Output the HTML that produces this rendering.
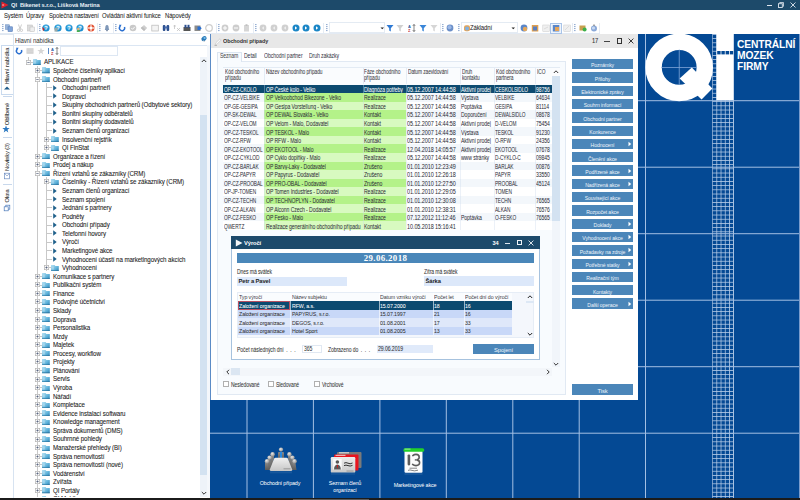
<!DOCTYPE html><html><head><meta charset="utf-8"><style>
*{margin:0;padding:0;box-sizing:border-box}
html,body{width:800px;height:500px;overflow:hidden;background:#fff;font-family:"Liberation Sans",sans-serif;color:#333}
.ab{position:absolute}
.t{position:absolute;white-space:nowrap;font-size:5.6px;line-height:8px;letter-spacing:-0.1px}
</style></head><body>
<div class="ab" style="left:0px;top:0px;width:800px;height:9.5px;background:#1d4a6a"></div>
<svg class="ab" style="left:1px;top:1px" width="8" height="8" viewBox="0 0 8 8"><path d="M0.5 0.5 L7.5 4 L0.5 7.5 Z" fill="#e0202a"/><path d="M1.5 3 L3.5 4 L1.5 5Z" fill="#fff" opacity=".7"/></svg>
<div class="t" style="left:10.5px;top:0.6px;transform:scaleX(0.93);transform-origin:0 0;font-weight:bold;color:#e6eef5;font-size:6.2px">QI&nbsp; Bikenet s.r.o., Lišková Martina</div>
<div class="ab" style="left:767px;top:4.5px;width:5px;height:0.8px;background:#dfe6ee"></div>
<svg class="ab" style="left:778px;top:2px" width="6" height="6" viewBox="0 0 6 6"><rect x="0.5" y="1.7" width="3.8" height="3.8" fill="none" stroke="#dfe6ee" stroke-width="0.9"/><path d="M1.7 1.2 V0.5 H5.5 V4.3 H4.8" fill="none" stroke="#dfe6ee" stroke-width="0.8"/></svg>
<svg class="ab" style="left:790px;top:2px" width="6" height="6" viewBox="0 0 6 6"><path d="M0.5 0.5 L5.5 5.5 M5.5 0.5 L0.5 5.5" stroke="#dfe6ee" stroke-width="0.9"/></svg>
<div class="t" style="left:3.5px;top:11.9px;transform:scaleX(0.86);transform-origin:0 0;color:#222;font-size:6.8px;-webkit-text-stroke:0.05px #222">Systém</div>
<div class="t" style="left:26px;top:11.9px;transform:scaleX(0.86);transform-origin:0 0;color:#222;font-size:6.8px;-webkit-text-stroke:0.05px #222">Úpravy</div>
<div class="t" style="left:48.5px;top:11.9px;transform:scaleX(0.86);transform-origin:0 0;color:#222;font-size:6.8px;-webkit-text-stroke:0.05px #222">Společná nastavení</div>
<div class="t" style="left:101.5px;top:11.9px;transform:scaleX(0.86);transform-origin:0 0;color:#222;font-size:6.8px;-webkit-text-stroke:0.05px #222">Ovládání aktivní funkce</div>
<div class="t" style="left:165px;top:11.9px;transform:scaleX(0.86);transform-origin:0 0;color:#222;font-size:6.8px;-webkit-text-stroke:0.05px #222">Nápovědy</div>
<div class="ab" style="left:0px;top:22px;width:600px;height:11.5px;background:#fff;border-bottom:1px solid #e3eaf3"></div>
<div class="ab" style="left:0px;top:33.5px;width:800px;height:0.8px;background:#dfe7f1"></div>
<svg class="ab" style="left:1.5px;top:23px" width="2" height="10" viewBox="0 0 2 10"><rect x="0.3" y="1" width="1.1" height="1.1" fill="#6d8fc0"/><rect x="0.3" y="3" width="1.1" height="1.1" fill="#6d8fc0"/><rect x="0.3" y="5" width="1.1" height="1.1" fill="#6d8fc0"/><rect x="0.3" y="7" width="1.1" height="1.1" fill="#6d8fc0"/></svg>
<svg class="ab" style="left:5px;top:24px" width="8" height="8" viewBox="0 0 8 8"><rect x="0.5" y="0.8" width="4" height="4.5" fill="#9bb7dd" stroke="#5e82b8" stroke-width=".5"/><rect x="3" y="2.8" width="4.5" height="4.8" fill="#7ea3d8" stroke="#4a70b0" stroke-width=".5"/></svg>
<svg class="ab" style="left:16px;top:24px" width="8" height="8" viewBox="0 0 8 8"><path d="M2.5 0.5 L4 5 M5.5 0.5 L4 5" stroke="#b8b8b8" stroke-width=".7" fill="none"/><circle cx="2.6" cy="6.3" r="1.2" fill="none" stroke="#b0b0b0" stroke-width=".6"/><circle cx="5.4" cy="6.3" r="1.2" fill="none" stroke="#b0b0b0" stroke-width=".6"/></svg>
<svg class="ab" style="left:27px;top:24px" width="8" height="8" viewBox="0 0 8 8"><rect x="0.5" y="1" width="5" height="6" fill="#ddd" stroke="#bbb" stroke-width=".5"/><rect x="3" y="3" width="4.5" height="4.5" fill="#eee" stroke="#bbb" stroke-width=".5"/></svg>
<div class="ab" style="left:37px;top:22.5px;width:0.6px;height:10.5px;background:#e6ecf4"></div>
<svg class="ab" style="left:39px;top:23px" width="2" height="10" viewBox="0 0 2 10"><rect x="0.3" y="1" width="1.1" height="1.1" fill="#6d8fc0"/><rect x="0.3" y="3" width="1.1" height="1.1" fill="#6d8fc0"/><rect x="0.3" y="5" width="1.1" height="1.1" fill="#6d8fc0"/><rect x="0.3" y="7" width="1.1" height="1.1" fill="#6d8fc0"/></svg>
<svg class="ab" style="left:42px;top:24px" width="8" height="8" viewBox="0 0 8 8"><circle cx="4" cy="4" r="3.6" fill="#1c8fd0"/><circle cx="4" cy="3.2" r="2.4" fill="#5fc0ee" opacity=".6"/><text x="4" y="6" font-size="5.5" text-anchor="middle" fill="#fff" font-family="Liberation Sans" font-weight="bold">?</text><path d="M0.3 3 L2.6 5 L1 7.2 Z" fill="#d42020"/></svg>
<svg class="ab" style="left:54px;top:24px" width="8" height="8" viewBox="0 0 8 8"><circle cx="4" cy="4" r="3.6" fill="#1c8fd0"/><circle cx="4" cy="3.2" r="2.4" fill="#5fc0ee" opacity=".6"/><text x="4" y="6" font-size="5.5" text-anchor="middle" fill="#fff" font-family="Liberation Sans" font-weight="bold">?</text><rect x="0.5" y="3.8" width="3" height="3.8" fill="#9aa" /></svg>
<svg class="ab" style="left:65px;top:24px" width="8" height="8" viewBox="0 0 8 8"><circle cx="4" cy="4" r="3.6" fill="#1c8fd0"/><circle cx="4" cy="3.2" r="2.4" fill="#5fc0ee" opacity=".6"/><text x="4" y="6" font-size="5.5" text-anchor="middle" fill="#fff" font-family="Liberation Sans" font-weight="bold">?</text></svg>
<svg class="ab" style="left:76px;top:24px" width="8" height="8" viewBox="0 0 8 8"><circle cx="4" cy="4" r="3.6" fill="#1c8fd0"/><circle cx="4" cy="3.2" r="2.4" fill="#5fc0ee" opacity=".6"/><text x="4" y="6" font-size="5.5" text-anchor="middle" fill="#fff" font-family="Liberation Sans" font-weight="bold">?</text><circle cx="2.3" cy="5" r="1.3" fill="#e8b070"/><rect x="0.8" y="6.2" width="3" height="1.8" fill="#4caf50"/></svg>
<svg class="ab" style="left:87px;top:24px" width="8" height="8" viewBox="0 0 8 8"><circle cx="4" cy="4" r="3.5" fill="#e24a2a"/><circle cx="4" cy="4" r="1.7" fill="#fff"/><path d="M4 0.5 V2.3 M4 5.7 V7.5 M0.5 4 H2.3 M5.7 4 H7.5" stroke="#f4d8d0" stroke-width="1.3"/><circle cx="4" cy="4" r="1.2" fill="#fff"/></svg>
<div class="ab" style="left:97px;top:22.5px;width:0.6px;height:10.5px;background:#e6ecf4"></div>
<svg class="ab" style="left:99px;top:23px" width="2" height="10" viewBox="0 0 2 10"><rect x="0.3" y="1" width="1.1" height="1.1" fill="#6d8fc0"/><rect x="0.3" y="3" width="1.1" height="1.1" fill="#6d8fc0"/><rect x="0.3" y="5" width="1.1" height="1.1" fill="#6d8fc0"/><rect x="0.3" y="7" width="1.1" height="1.1" fill="#6d8fc0"/></svg>
<svg class="ab" style="left:103px;top:24px" width="8" height="8" viewBox="0 0 8 8"><path d="M4 1 C2.5 1 2.3 2.5 2.3 4 L1.8 6 H6.2 L5.7 4 C5.7 2.5 5.5 1 4 1Z" fill="#7f97b8"/><rect x="3.3" y="6" width="1.4" height="1.2" fill="#5a6f8f"/></svg>
<div class="ab" style="left:113px;top:22.5px;width:0.6px;height:10.5px;background:#e6ecf4"></div>
<svg class="ab" style="left:115px;top:23px" width="2" height="10" viewBox="0 0 2 10"><rect x="0.3" y="1" width="1.1" height="1.1" fill="#6d8fc0"/><rect x="0.3" y="3" width="1.1" height="1.1" fill="#6d8fc0"/><rect x="0.3" y="5" width="1.1" height="1.1" fill="#6d8fc0"/><rect x="0.3" y="7" width="1.1" height="1.1" fill="#6d8fc0"/></svg>
<svg class="ab" style="left:118px;top:24px" width="8" height="8" viewBox="0 0 8 8"><path d="M2.2 2.2 A2.6 2.6 0 1 0 6.4 3" fill="none" stroke="#2a6fd0" stroke-width="1.5"/><path d="M1 0.8 L3.6 0.8 L2 3.6Z" fill="#2a6fd0"/></svg>
<svg class="ab" style="left:129px;top:24px" width="8" height="8" viewBox="0 0 8 8"><circle cx="4" cy="4" r="3.3" fill="#c9c9c9"/><path d="M2.3 4 L3.6 5.3 L5.8 2.8" stroke="#fff" stroke-width=".9" fill="none"/></svg>
<svg class="ab" style="left:140px;top:24px" width="8" height="8" viewBox="0 0 8 8"><path d="M0.8 4 L4 1 L7.2 4 L4 7Z" fill="#cfcfcf"/><path d="M0.8 4 L4 7 L5.5 5.5 L2.3 2.5Z" fill="#bdbdbd"/></svg>
<svg class="ab" style="left:151px;top:24px" width="8" height="8" viewBox="0 0 8 8"><rect x="0.8" y="1.2" width="6.5" height="5.8" fill="#f4f4f4" stroke="#b8b8b8" stroke-width=".7"/></svg>
<svg class="ab" style="left:162px;top:24px" width="8" height="8" viewBox="0 0 8 8"><rect x="0.8" y="1" width="2.6" height="6" rx="1" fill="#2b4f8f"/><rect x="4.6" y="1" width="2.6" height="6" rx="1" fill="#2b4f8f"/><rect x="2.5" y="2.5" width="3" height="2" fill="#4a6fb0"/></svg>
<svg class="ab" style="left:173px;top:24px" width="8" height="8" viewBox="0 0 8 8"><path d="M1.5 1 V5 M0.5 2 H3 M4 4 L7 7 M7 4 L4 7" stroke="#bbb" stroke-width=".7"/></svg>
<svg class="ab" style="left:183px;top:24px" width="8" height="8" viewBox="0 0 8 8"><rect x="0.5" y="3" width="7" height="4" fill="#555"/><rect x="1.5" y="0.8" width="2" height="3" fill="#2b4f8f"/><rect x="4.5" y="0.8" width="2" height="3" fill="#2b4f8f"/></svg>
<svg class="ab" style="left:194px;top:24px" width="8" height="8" viewBox="0 0 8 8"><rect x="0.5" y="1.5" width="6" height="5.5" fill="#8a8a8a"/><path d="M3.5 2.5 H6 L7.7 4.2 L6 6 H3.5Z" fill="#2a6fd0"/></svg>
<svg class="ab" style="left:205px;top:24px" width="8" height="8" viewBox="0 0 8 8"><circle cx="4" cy="4" r="3.3" fill="none" stroke="#cfcfcf" stroke-width="1.3"/></svg>
<div class="ab" style="left:216px;top:22.5px;width:0.6px;height:10.5px;background:#e6ecf4"></div>
<svg class="ab" style="left:218px;top:23px" width="2" height="10" viewBox="0 0 2 10"><rect x="0.3" y="1" width="1.1" height="1.1" fill="#6d8fc0"/><rect x="0.3" y="3" width="1.1" height="1.1" fill="#6d8fc0"/><rect x="0.3" y="5" width="1.1" height="1.1" fill="#6d8fc0"/><rect x="0.3" y="7" width="1.1" height="1.1" fill="#6d8fc0"/></svg>
<svg class="ab" style="left:221px;top:24px" width="8" height="8" viewBox="0 0 8 8"><circle cx="4" cy="4" r="3.4" fill="#cdcdcd"/><path d="M2 4 H6 M4 2 V6" stroke="#fff" stroke-width="1"/></svg>
<svg class="ab" style="left:232px;top:24px" width="8" height="8" viewBox="0 0 8 8"><circle cx="4" cy="4" r="3.4" fill="#cdcdcd"/><path d="M2 4 H6" stroke="#fff" stroke-width="1"/></svg>
<svg class="ab" style="left:243px;top:24px" width="8" height="8" viewBox="0 0 8 8"><rect x="1" y="1" width="5" height="6.5" fill="#d6d6d6"/><rect x="2.5" y="0.3" width="2" height="1.5" fill="#bbb"/></svg>
<div class="ab" style="left:253px;top:22.5px;width:0.6px;height:10.5px;background:#e6ecf4"></div>
<svg class="ab" style="left:255px;top:23px" width="2" height="10" viewBox="0 0 2 10"><rect x="0.3" y="1" width="1.1" height="1.1" fill="#6d8fc0"/><rect x="0.3" y="3" width="1.1" height="1.1" fill="#6d8fc0"/><rect x="0.3" y="5" width="1.1" height="1.1" fill="#6d8fc0"/><rect x="0.3" y="7" width="1.1" height="1.1" fill="#6d8fc0"/></svg>
<svg class="ab" style="left:259px;top:24px" width="8" height="8" viewBox="0 0 8 8"><circle cx="4" cy="4" r="3.4" fill="#d0d0d0"/><path d="M5 2.2 L2.8 4 L5 5.8Z" fill="#eee"/></svg>
<svg class="ab" style="left:270px;top:24px" width="8" height="8" viewBox="0 0 8 8"><circle cx="4" cy="4" r="3.4" fill="#d0d0d0"/><path d="M5 2.2 L2.8 4 L5 5.8Z" fill="#eee"/></svg>
<svg class="ab" style="left:281px;top:24px" width="8" height="8" viewBox="0 0 8 8"><circle cx="4" cy="4" r="3.4" fill="#d0d0d0"/><path d="M5 2.2 L2.8 4 L5 5.8Z" fill="#eee"/></svg>
<svg class="ab" style="left:291.5px;top:24px" width="8" height="8" viewBox="0 0 8 8"><circle cx="4" cy="4" r="3.5" fill="#1b86c6"/><path d="M3 2.2 L5.2 4 L3 5.8Z" fill="#fff"/></svg>
<svg class="ab" style="left:302px;top:24px" width="8" height="8" viewBox="0 0 8 8"><circle cx="4" cy="4" r="3.5" fill="#1b86c6"/><path d="M3 2.2 L5.2 4 L3 5.8Z" fill="#fff"/></svg>
<svg class="ab" style="left:313px;top:24px" width="8" height="8" viewBox="0 0 8 8"><circle cx="4" cy="4" r="3.5" fill="#1b86c6"/><path d="M3 2.2 L5.2 4 L3 5.8Z" fill="#fff"/></svg>
<div class="ab" style="left:323px;top:22.5px;width:0.6px;height:10.5px;background:#e6ecf4"></div>
<svg class="ab" style="left:325.5px;top:23px" width="2" height="10" viewBox="0 0 2 10"><rect x="0.3" y="1" width="1.1" height="1.1" fill="#6d8fc0"/><rect x="0.3" y="3" width="1.1" height="1.1" fill="#6d8fc0"/><rect x="0.3" y="5" width="1.1" height="1.1" fill="#6d8fc0"/><rect x="0.3" y="7" width="1.1" height="1.1" fill="#6d8fc0"/></svg>
<div class="ab" style="left:329px;top:22px;width:56px;height:11px;background:#fff;border:1px solid #e4ebf3"></div>
<svg class="ab" style="left:379px;top:24px" width="8" height="8" viewBox="0 0 8 8"><path d="M1.5 3.5 H5 L3.25 5.3Z" fill="#222"/></svg>
<svg class="ab" style="left:386px;top:24px" width="8" height="8" viewBox="0 0 8 8"><path d="M0.5 1 H7.5 L4.8 4.3 V7.5 L3.2 6.5 V4.3Z" fill="#2f7ad4"/></svg>
<svg class="ab" style="left:396px;top:24px" width="8" height="8" viewBox="0 0 8 8"><path d="M0.5 1 H7.5 L4.8 4.3 V7.5 L3.2 6.5 V4.3Z" fill="#d0d0d0"/></svg>
<svg class="ab" style="left:408px;top:24px" width="8" height="8" viewBox="0 0 8 8"><text x="0" y="4" font-size="4" fill="#2b5aa0" font-family="Liberation Sans" font-weight="bold">A</text><text x="0" y="8" font-size="4" fill="#c03030" font-family="Liberation Sans" font-weight="bold">Z</text><path d="M6 0.5 V7.5 M4.8 1.8 L6 0.5 L7.2 1.8 M4.8 6.2 L6 7.5 L7.2 6.2" stroke="#333" stroke-width=".6" fill="none"/></svg>
<svg class="ab" style="left:419px;top:24px" width="8" height="8" viewBox="0 0 8 8"><path d="M0.5 1 H7.5 L4.8 4.3 V7.5 L3.2 6.5 V4.3Z" fill="#3a86d8"/></svg>
<svg class="ab" style="left:430px;top:24px" width="8" height="8" viewBox="0 0 8 8"><path d="M0.5 1 H7.5 L4.8 4.3 V7.5 L3.2 6.5 V4.3Z" fill="#d6d6d6"/></svg>
<div class="ab" style="left:440px;top:22.5px;width:0.6px;height:10.5px;background:#e6ecf4"></div>
<svg class="ab" style="left:442px;top:23px" width="2" height="10" viewBox="0 0 2 10"><rect x="0.3" y="1" width="1.1" height="1.1" fill="#6d8fc0"/><rect x="0.3" y="3" width="1.1" height="1.1" fill="#6d8fc0"/><rect x="0.3" y="5" width="1.1" height="1.1" fill="#6d8fc0"/><rect x="0.3" y="7" width="1.1" height="1.1" fill="#6d8fc0"/></svg>
<svg class="ab" style="left:446px;top:24px" width="8" height="8" viewBox="0 0 8 8"><circle cx="4" cy="4" r="3.4" fill="#6b8fc8"/><circle cx="3.5" cy="3.3" r="2" fill="#9bb8e6"/></svg>
<svg class="ab" style="left:458px;top:23px" width="2" height="10" viewBox="0 0 2 10"><rect x="0.3" y="1" width="1.1" height="1.1" fill="#6d8fc0"/><rect x="0.3" y="3" width="1.1" height="1.1" fill="#6d8fc0"/><rect x="0.3" y="5" width="1.1" height="1.1" fill="#6d8fc0"/><rect x="0.3" y="7" width="1.1" height="1.1" fill="#6d8fc0"/></svg>
<div class="ab" style="left:461px;top:22px;width:57px;height:11px;background:#fff;border:1px solid #e4ebf3"></div>
<svg class="ab" style="left:463px;top:24px" width="8" height="8" viewBox="0 0 8 8"><rect x="1" y="1.2" width="6" height="6" rx="2" fill="#e3a45a"/><circle cx="4" cy="4.5" r="2" fill="#7fb0e0"/></svg>
<div class="t" style="left:470.3px;top:23.6px;transform:scaleX(0.86);transform-origin:0 0;color:#222;font-size:6.9px;-webkit-text-stroke:0.05px #222">Základní</div>
<svg class="ab" style="left:510px;top:24px" width="8" height="8" viewBox="0 0 8 8"><path d="M1.5 3.5 H5 L3.25 5.3Z" fill="#222"/></svg>
<svg class="ab" style="left:520px;top:24px" width="8" height="8" viewBox="0 0 8 8"><circle cx="4" cy="4" r="3.4" fill="#5a86c8"/><circle cx="5" cy="5" r="2.2" fill="#e6a85a"/></svg>
<svg class="ab" style="left:531px;top:24px" width="8" height="8" viewBox="0 0 8 8"><rect x="0.8" y="1" width="6.5" height="6.5" fill="#e0a050"/><rect x="2" y="2.5" width="4" height="4" fill="#5a7fc0"/></svg>
<svg class="ab" style="left:542px;top:24px" width="8" height="8" viewBox="0 0 8 8"><rect x="0.8" y="1" width="6.5" height="6.5" fill="#f0f0f0" stroke="#ccc" stroke-width=".5"/><path d="M2 5 L6 3" stroke="#ccc" stroke-width=".6"/></svg>
<div class="ab" style="left:550px;top:22.5px;width:11.5px;height:11px;background:#eef4fc;border:1px solid #a9c4e8"></div>
<svg class="ab" style="left:552px;top:24px" width="8" height="8" viewBox="0 0 8 8"><rect x="0.8" y="1" width="6.5" height="6.5" fill="#5a86c8"/><rect x="3" y="3" width="4" height="4" fill="#e3a45a"/></svg>
<svg class="ab" style="left:563px;top:24px" width="8" height="8" viewBox="0 0 8 8"><rect x="0.8" y="1" width="6.5" height="6.5" fill="#f0f0f0" stroke="#ccc" stroke-width=".5"/><path d="M2 6 L6 2" stroke="#ccc" stroke-width=".6"/></svg>
<div class="ab" style="left:572px;top:22.5px;width:0.6px;height:10.5px;background:#e6ecf4"></div>
<svg class="ab" style="left:574px;top:23px" width="2" height="10" viewBox="0 0 2 10"><rect x="0.3" y="1" width="1.1" height="1.1" fill="#6d8fc0"/><rect x="0.3" y="3" width="1.1" height="1.1" fill="#6d8fc0"/><rect x="0.3" y="5" width="1.1" height="1.1" fill="#6d8fc0"/><rect x="0.3" y="7" width="1.1" height="1.1" fill="#6d8fc0"/></svg>
<svg class="ab" style="left:579px;top:24px" width="8" height="8" viewBox="0 0 8 8"><rect x="0.5" y="1.5" width="6" height="5" fill="#c8a050"/><circle cx="5.6" cy="5.6" r="2" fill="#3cb04a"/></svg>
<svg class="ab" style="left:590px;top:24px" width="8" height="8" viewBox="0 0 8 8"><circle cx="4" cy="4.4" r="3" fill="#8aa8d8"/><circle cx="3.5" cy="4" r="1.6" fill="#c8daf4"/><rect x="3.4" y="0.5" width="1.2" height="1.5" fill="#777"/></svg>
<div class="ab" style="left:599px;top:22.5px;width:0.6px;height:10.5px;background:#e6ecf4"></div>
<div class="ab" style="left:210px;top:34px;width:590px;height:464px;background:#044994"></div>
<svg class="ab" style="left:210px;top:34px" width="590" height="464" viewBox="210 34 590 464"><defs><pattern id="gp" x="712.2" y="34" width="4.2" height="4.2" patternUnits="userSpaceOnUse"><rect x="0" y="0" width="4.2" height="4.2" fill="#044994"/><rect x="0" y="0" width="0.75" height="4.2" fill="#b8cde8"/><rect x="0" y="0" width="4.2" height="0.75" fill="#b8cde8"/></pattern></defs><rect x="712.2" y="34" width="21.5" height="464" fill="url(#gp)"/><rect x="733.2" y="34" width="0.8" height="464" fill="#b8cde8"/><rect x="210" y="100.19999999999999" width="590" height="1" fill="#a3bfe3"/><rect x="210" y="166.7" width="590" height="1" fill="#a3bfe3"/><rect x="210" y="233.2" width="590" height="1" fill="#a3bfe3"/><rect x="210" y="299.70000000000005" width="590" height="1" fill="#a3bfe3"/><rect x="210" y="366.20000000000005" width="590" height="1" fill="#a3bfe3"/><rect x="210" y="432.70000000000005" width="590" height="1" fill="#a3bfe3"/><rect x="246.5" y="34" width="1" height="464" fill="#a3bfe3"/><rect x="312.90000000000003" y="34" width="1" height="464" fill="#a3bfe3"/><rect x="379.40000000000003" y="34" width="1" height="464" fill="#a3bfe3"/><rect x="445.8" y="34" width="1" height="464" fill="#a3bfe3"/><rect x="512.3000000000001" y="34" width="1" height="464" fill="#a3bfe3"/><rect x="578.7" y="34" width="1" height="464" fill="#a3bfe3"/><rect x="645.0" y="34" width="1" height="464" fill="#a3bfe3"/><rect x="799" y="34" width="1" height="464" fill="#7a9ccc"/><circle cx="679.2" cy="67.4" r="25.6" fill="none" stroke="#fff" stroke-width="16.4"/><rect x="678.8" y="49.5" width="0.8" height="35.5" fill="#7fa4d8"/><rect x="661.5" y="67" width="35.5" height="0.8" fill="#7fa4d8"/><path d="M691.8 67.6 L712.4 88.6 L701.6 99.6 L679.6 78.6Z" fill="#fff"/><rect x="716.4" y="34" width="17" height="66.2" fill="#fff"/><rect x="717.2" y="51" width="3.4" height="3.4" fill="#044994"/><rect x="721.4000000000001" y="51" width="3.4" height="3.4" fill="#044994"/><rect x="725.6" y="51" width="3.4" height="3.4" fill="#044994"/><rect x="729.8000000000001" y="51" width="3.4" height="3.4" fill="#044994"/></svg>
<div class="t" style="left:736.6px;top:39.9px;transform:scaleX(0.995);transform-origin:0 0;color:#fff;font-weight:bold;font-size:10.3px;line-height:10px">CENTRÁLNÍ</div>
<div class="t" style="left:736.6px;top:51.0px;transform:scaleX(0.995);transform-origin:0 0;color:#fff;font-weight:bold;font-size:10.3px;line-height:10px">MOZEK</div>
<div class="t" style="left:736.6px;top:62.099999999999994px;transform:scaleX(0.995);transform-origin:0 0;color:#fff;font-weight:bold;font-size:10.3px;line-height:10px">FIRMY</div>
<div class="ab" style="left:13px;top:34.3px;width:197px;height:10.5px;background:#fff;border-left:1px solid #dbe5f1"></div>
<div class="t" style="left:15px;top:36.8px;transform:scaleX(0.95);transform-origin:0 0;color:#333;font-size:6.3px">Hlavní nabídka</div>
<svg class="ab" style="left:200px;top:35px" width="8" height="8" viewBox="0 0 8 8"><ellipse cx="4" cy="3.6" rx="2.8" ry="2.2" transform="rotate(-35 4 3.6)" fill="#2a7ab8"/><circle cx="4.6" cy="3" r="1.1" fill="#7cc0ee"/><path d="M3 5 L5 7" stroke="#bbb" stroke-width=".6"/></svg>
<div class="ab" style="left:0px;top:44.5px;width:210px;height:0.8px;background:#dbe6f3"></div>
<div class="ab" style="left:0px;top:45px;width:13.5px;height:453px;background:#fff;border-right:1px solid #d7e3f1"></div>
<div class="ab" style="left:1px;top:45px;width:12px;height:50px;background:#fff;border:1px solid #c9daee;border-right:none"></div>
<div class="t" style="left:5.6px;top:66px;transform:translate(-50%,-50%) rotate(-90deg) scaleX(0.92);color:#333;font-size:6.2px;line-height:7px;-webkit-text-stroke:0.05px #333">Hlavní nabídka</div>
<svg class="ab" style="left:2.5px;top:84px" width="8" height="8" viewBox="0 0 8 8"><path d="M1 5.5 L4 2.5 L7 5.5Z" fill="#1d5a8a"/></svg>
<div class="ab" style="left:3px;top:96px;width:9px;height:0.8px;background:#c8d8ec"></div>
<div class="t" style="left:5.6px;top:113.5px;transform:translate(-50%,-50%) rotate(-90deg) scaleX(0.92);color:#333;font-size:6.2px;line-height:7px;-webkit-text-stroke:0.05px #333">Oblíbené</div>
<svg class="ab" style="left:2.2px;top:124.5px" width="8" height="8" viewBox="0 0 8 8"><path d="M4 0.4 L5 3 L7.7 3 L5.5 4.7 L6.3 7.5 L4 5.8 L1.7 7.5 L2.5 4.7 L0.3 3 L3 3Z" fill="#2b78c0"/></svg>
<div class="ab" style="left:3px;top:137px;width:9px;height:0.8px;background:#c8d8ec"></div>
<div class="t" style="left:5.6px;top:156.5px;transform:translate(-50%,-50%) rotate(-90deg) scaleX(0.92);color:#333;font-size:6.2px;line-height:7px;-webkit-text-stroke:0.05px #333">Novinky (3)</div>
<svg class="ab" style="left:2.5px;top:171.5px" width="8" height="8" viewBox="0 0 8 8"><rect x="1.6" y="1.2" width="4.8" height="5.6" fill="#fff" stroke="#6c8cc0" stroke-width=".7"/><path d="M1.2 1 L4 4 L6.8 1" stroke="#6c8cc0" stroke-width=".6" fill="none"/></svg>
<div class="ab" style="left:3px;top:183.5px;width:9px;height:0.8px;background:#c8d8ec"></div>
<div class="t" style="left:5.6px;top:196px;transform:translate(-50%,-50%) rotate(-90deg) scaleX(0.92);color:#333;font-size:6.2px;line-height:7px;-webkit-text-stroke:0.05px #333">Okna</div>
<svg class="ab" style="left:2.5px;top:204px" width="8" height="8" viewBox="0 0 8 8"><rect x="2.8" y="1.2" width="4" height="4" fill="#fff" stroke="#4a78b8" stroke-width=".7"/><rect x="1.2" y="2.8" width="4" height="4" fill="#fff" stroke="#4a78b8" stroke-width=".7"/></svg>
<svg class="ab" style="left:14.5px;top:47px" width="8" height="8" viewBox="0 0 8 8"><path d="M2.2 2.2 A2.6 2.6 0 1 0 6.4 3" fill="none" stroke="#2a6fd0" stroke-width="1.5"/><path d="M1 0.8 L3.6 0.8 L2 3.6Z" fill="#2a6fd0"/></svg>
<svg class="ab" style="left:25.5px;top:47px" width="8" height="8" viewBox="0 0 8 8"><rect x="0.5" y="1.2" width="7" height="5.6" fill="#d0d0d0"/><path d="M0.5 3 H7.5 M0.5 4.8 H7.5" stroke="#e6e6e6" stroke-width=".5"/></svg>
<svg class="ab" style="left:36.5px;top:47px" width="8" height="8" viewBox="0 0 8 8"><path d="M4 0.4 L5 3 L7.7 3 L5.5 4.7 L6.3 7.5 L4 5.8 L1.7 7.5 L2.5 4.7 L0.3 3 L3 3Z" fill="#d6d6d6"/></svg>
<div class="ab" style="left:47.5px;top:48px;width:0.8px;height:6px;background:#5a8ac8"></div>
<svg class="ab" style="left:51px;top:47px" width="8" height="8" viewBox="0 0 8 8"><text x="0" y="4" font-size="4" fill="#2b5aa0" font-family="Liberation Sans" font-weight="bold">A</text><text x="0" y="8" font-size="4" fill="#c03030" font-family="Liberation Sans" font-weight="bold">Z</text><path d="M6 0.5 V7.5 M4.8 1.8 L6 0.5 L7.2 1.8 M4.8 6.2 L6 7.5 L7.2 6.2" stroke="#333" stroke-width=".6" fill="none"/></svg>
<div class="ab" style="left:60px;top:46px;width:57.5px;height:9.5px;background:#fff;border:1px solid #dde7f3"></div>
<div class="ab" style="left:200px;top:57px;width:7px;height:440px;background:#eef3f9"></div>
<div class="ab" style="left:200px;top:115px;width:7px;height:360px;background:#d3e2f1"></div>
<svg class="ab" style="left:199.5px;top:57px" width="8" height="8" viewBox="0 0 8 8"><path d="M1.8 5 L4 2.8 L6.2 5" stroke="#333" stroke-width="1" fill="none"/></svg>
<svg class="ab" style="left:199.5px;top:489px" width="8" height="8" viewBox="0 0 8 8"><path d="M1.8 3 L4 5.2 L6.2 3" stroke="#333" stroke-width="1" fill="none"/></svg>
<div class="ab" style="left:207px;top:45px;width:3px;height:453px;background:#f4f7fb"></div>
<div class="ab" style="left:14px;top:57px;width:186px;height:440px;overflow:hidden">
<div class="ab" style="left:14.3px;top:0px;width:0.7px;height:5px;background:#c8c8c8"></div>
<div class="ab" style="left:23.299999999999997px;top:9.284999999999997px;width:0.7px;height:500px;background:#c8c8c8"></div>
<div class="ab" style="left:32.3px;top:26.284999999999997px;width:0.7px;height:68.56px;background:#c8c8c8"></div>
<div class="ab" style="left:32.3px;top:119.785px;width:0.7px;height:94.27000000000001px;background:#c8c8c8"></div>
<div class="ab" style="left:16.5px;top:4.700000000000003px;width:3px;height:0.7px;background:#c8c8c8"></div>
<svg class="ab" style="left:12px;top:2.5px" width="5" height="5" viewBox="0 0 5 5"><rect x="0.35" y="0.35" width="4.3" height="4.3" fill="#fbfbfb" stroke="#b4b4b4" stroke-width="0.7"/><path d="M1.3 2.5 H3.7" stroke="#3a4a6a" stroke-width="0.6"/></svg>
<svg class="ab" style="left:19px;top:1.8999999999999986px" width="8" height="6.2" viewBox="0 0 8 6.2"><defs><linearGradient id="fg" x1="0" y1="0" x2="1" y2="1"><stop offset="0" stop-color="#b8e2f4"/><stop offset=".6" stop-color="#5fb2da"/><stop offset="1" stop-color="#2b7fb0"/></linearGradient></defs><path d="M0 0 H3.6 L4.3 0.9 H7.8 V6.2 H0Z" fill="url(#fg)"/><rect x="0" y="5.3" width="7.8" height="0.9" fill="#2a6f98" opacity=".7"/><rect x="0.6" y="1.6" width="2.5" height="3" fill="#fff" opacity=".25"/></svg>
<div class="t" style="left:29.5px;top:1.3999999999999986px;transform:scaleX(0.925);transform-origin:0 0;color:#222;font-size:6.7px;-webkit-text-stroke:0.08px #222">APLIKACE</div>
<div class="ab" style="left:25.5px;top:13.269999999999996px;width:3px;height:0.7px;background:#c8c8c8"></div>
<svg class="ab" style="left:21px;top:11.069999999999993px" width="5" height="5" viewBox="0 0 5 5"><rect x="0.35" y="0.35" width="4.3" height="4.3" fill="#fbfbfb" stroke="#b4b4b4" stroke-width="0.7"/><path d="M1.3 2.5 H3.7 M2.5 1.3 V3.7" stroke="#3a4a6a" stroke-width="0.6"/></svg>
<svg class="ab" style="left:28px;top:10.469999999999999px" width="8" height="6.2" viewBox="0 0 8 6.2"><defs><linearGradient id="fg" x1="0" y1="0" x2="1" y2="1"><stop offset="0" stop-color="#b8e2f4"/><stop offset=".6" stop-color="#5fb2da"/><stop offset="1" stop-color="#2b7fb0"/></linearGradient></defs><path d="M0 0 H3.6 L4.3 0.9 H7.8 V6.2 H0Z" fill="url(#fg)"/><rect x="0" y="5.3" width="7.8" height="0.9" fill="#2a6f98" opacity=".7"/><rect x="0.6" y="1.6" width="2.5" height="3" fill="#fff" opacity=".25"/></svg>
<div class="t" style="left:38.5px;top:9.969999999999999px;transform:scaleX(0.925);transform-origin:0 0;color:#222;font-size:6.7px;-webkit-text-stroke:0.08px #222">Společné číselníky aplikací</div>
<div class="ab" style="left:25.5px;top:21.840000000000003px;width:3px;height:0.7px;background:#c8c8c8"></div>
<svg class="ab" style="left:21px;top:19.64px" width="5" height="5" viewBox="0 0 5 5"><rect x="0.35" y="0.35" width="4.3" height="4.3" fill="#fbfbfb" stroke="#b4b4b4" stroke-width="0.7"/><path d="M1.3 2.5 H3.7" stroke="#3a4a6a" stroke-width="0.6"/></svg>
<svg class="ab" style="left:28px;top:19.040000000000006px" width="8" height="6.2" viewBox="0 0 8 6.2"><defs><linearGradient id="fg" x1="0" y1="0" x2="1" y2="1"><stop offset="0" stop-color="#b8e2f4"/><stop offset=".6" stop-color="#5fb2da"/><stop offset="1" stop-color="#2b7fb0"/></linearGradient></defs><path d="M0 0 H3.6 L4.3 0.9 H7.8 V6.2 H0Z" fill="url(#fg)"/><rect x="0" y="5.3" width="7.8" height="0.9" fill="#2a6f98" opacity=".7"/><rect x="0.6" y="1.6" width="2.5" height="3" fill="#fff" opacity=".25"/></svg>
<div class="t" style="left:38.5px;top:18.540000000000006px;transform:scaleX(0.925);transform-origin:0 0;color:#222;font-size:6.7px;-webkit-text-stroke:0.08px #222">Obchodní partneři</div>
<div class="ab" style="left:33px;top:30.41000000000001px;width:5px;height:0.7px;background:#c8c8c8"></div>
<svg class="ab" style="left:39.3px;top:27.710000000000008px" width="4" height="6" viewBox="0 0 4 6"><path d="M0.2 0.2 L3.7 3 L0.2 5.8Z" fill="#1d5f8a"/></svg>
<div class="t" style="left:47.5px;top:27.110000000000014px;transform:scaleX(0.925);transform-origin:0 0;color:#222;font-size:6.7px;-webkit-text-stroke:0.08px #222">Obchodní partneři</div>
<div class="ab" style="left:33px;top:38.980000000000004px;width:5px;height:0.7px;background:#c8c8c8"></div>
<svg class="ab" style="left:39.3px;top:36.28px" width="4" height="6" viewBox="0 0 4 6"><path d="M0.2 0.2 L3.7 3 L0.2 5.8Z" fill="#1d5f8a"/></svg>
<div class="t" style="left:47.5px;top:35.68000000000001px;transform:scaleX(0.925);transform-origin:0 0;color:#222;font-size:6.7px;-webkit-text-stroke:0.08px #222">Dopravci</div>
<div class="ab" style="left:33px;top:47.55px;width:5px;height:0.7px;background:#c8c8c8"></div>
<svg class="ab" style="left:39.3px;top:44.849999999999994px" width="4" height="6" viewBox="0 0 4 6"><path d="M0.2 0.2 L3.7 3 L0.2 5.8Z" fill="#1d5f8a"/></svg>
<div class="t" style="left:47.5px;top:44.25px;transform:scaleX(0.925);transform-origin:0 0;color:#222;font-size:6.7px;-webkit-text-stroke:0.08px #222">Skupiny obchodních partnerů (Odbytové sektory)</div>
<div class="ab" style="left:33px;top:56.120000000000005px;width:5px;height:0.7px;background:#c8c8c8"></div>
<svg class="ab" style="left:39.3px;top:53.42px" width="4" height="6" viewBox="0 0 4 6"><path d="M0.2 0.2 L3.7 3 L0.2 5.8Z" fill="#1d5f8a"/></svg>
<div class="t" style="left:47.5px;top:52.82000000000001px;transform:scaleX(0.925);transform-origin:0 0;color:#222;font-size:6.7px;-webkit-text-stroke:0.08px #222">Bonitní skupiny odběratelů</div>
<div class="ab" style="left:33px;top:64.69000000000001px;width:5px;height:0.7px;background:#c8c8c8"></div>
<svg class="ab" style="left:39.3px;top:61.99000000000001px" width="4" height="6" viewBox="0 0 4 6"><path d="M0.2 0.2 L3.7 3 L0.2 5.8Z" fill="#1d5f8a"/></svg>
<div class="t" style="left:47.5px;top:61.390000000000015px;transform:scaleX(0.925);transform-origin:0 0;color:#222;font-size:6.7px;-webkit-text-stroke:0.08px #222">Bonitní skupiny dodavatelů</div>
<div class="ab" style="left:33px;top:73.25999999999999px;width:5px;height:0.7px;background:#c8c8c8"></div>
<svg class="ab" style="left:39.3px;top:70.56px" width="4" height="6" viewBox="0 0 4 6"><path d="M0.2 0.2 L3.7 3 L0.2 5.8Z" fill="#1d5f8a"/></svg>
<div class="t" style="left:47.5px;top:69.96000000000001px;transform:scaleX(0.925);transform-origin:0 0;color:#222;font-size:6.7px;-webkit-text-stroke:0.08px #222">Seznam členů organizací</div>
<div class="ab" style="left:34.5px;top:81.82999999999998px;width:3px;height:0.7px;background:#c8c8c8"></div>
<svg class="ab" style="left:30px;top:79.63px" width="5" height="5" viewBox="0 0 5 5"><rect x="0.35" y="0.35" width="4.3" height="4.3" fill="#fbfbfb" stroke="#b4b4b4" stroke-width="0.7"/><path d="M1.3 2.5 H3.7 M2.5 1.3 V3.7" stroke="#3a4a6a" stroke-width="0.6"/></svg>
<svg class="ab" style="left:37px;top:79.03px" width="8" height="6.2" viewBox="0 0 8 6.2"><defs><linearGradient id="fg" x1="0" y1="0" x2="1" y2="1"><stop offset="0" stop-color="#b8e2f4"/><stop offset=".6" stop-color="#5fb2da"/><stop offset="1" stop-color="#2b7fb0"/></linearGradient></defs><path d="M0 0 H3.6 L4.3 0.9 H7.8 V6.2 H0Z" fill="url(#fg)"/><rect x="0" y="5.3" width="7.8" height="0.9" fill="#2a6f98" opacity=".7"/><rect x="0.6" y="1.6" width="2.5" height="3" fill="#fff" opacity=".25"/></svg>
<div class="t" style="left:47.5px;top:78.53px;transform:scaleX(0.925);transform-origin:0 0;color:#222;font-size:6.7px;-webkit-text-stroke:0.08px #222">Insolvenční rejstřík</div>
<div class="ab" style="left:34.5px;top:90.39999999999998px;width:3px;height:0.7px;background:#c8c8c8"></div>
<svg class="ab" style="left:30px;top:88.19999999999999px" width="5" height="5" viewBox="0 0 5 5"><rect x="0.35" y="0.35" width="4.3" height="4.3" fill="#fbfbfb" stroke="#b4b4b4" stroke-width="0.7"/><path d="M1.3 2.5 H3.7 M2.5 1.3 V3.7" stroke="#3a4a6a" stroke-width="0.6"/></svg>
<svg class="ab" style="left:37px;top:87.6px" width="8" height="6.2" viewBox="0 0 8 6.2"><defs><linearGradient id="fg" x1="0" y1="0" x2="1" y2="1"><stop offset="0" stop-color="#b8e2f4"/><stop offset=".6" stop-color="#5fb2da"/><stop offset="1" stop-color="#2b7fb0"/></linearGradient></defs><path d="M0 0 H3.6 L4.3 0.9 H7.8 V6.2 H0Z" fill="url(#fg)"/><rect x="0" y="5.3" width="7.8" height="0.9" fill="#2a6f98" opacity=".7"/><rect x="0.6" y="1.6" width="2.5" height="3" fill="#fff" opacity=".25"/></svg>
<div class="t" style="left:47.5px;top:87.1px;transform:scaleX(0.925);transform-origin:0 0;color:#222;font-size:6.7px;-webkit-text-stroke:0.08px #222">QI FinStat</div>
<div class="ab" style="left:25.5px;top:98.97px;width:3px;height:0.7px;background:#c8c8c8"></div>
<svg class="ab" style="left:21px;top:96.77000000000001px" width="5" height="5" viewBox="0 0 5 5"><rect x="0.35" y="0.35" width="4.3" height="4.3" fill="#fbfbfb" stroke="#b4b4b4" stroke-width="0.7"/><path d="M1.3 2.5 H3.7 M2.5 1.3 V3.7" stroke="#3a4a6a" stroke-width="0.6"/></svg>
<svg class="ab" style="left:28px;top:96.17000000000002px" width="8" height="6.2" viewBox="0 0 8 6.2"><defs><linearGradient id="fg" x1="0" y1="0" x2="1" y2="1"><stop offset="0" stop-color="#b8e2f4"/><stop offset=".6" stop-color="#5fb2da"/><stop offset="1" stop-color="#2b7fb0"/></linearGradient></defs><path d="M0 0 H3.6 L4.3 0.9 H7.8 V6.2 H0Z" fill="url(#fg)"/><rect x="0" y="5.3" width="7.8" height="0.9" fill="#2a6f98" opacity=".7"/><rect x="0.6" y="1.6" width="2.5" height="3" fill="#fff" opacity=".25"/></svg>
<div class="t" style="left:38.5px;top:95.67000000000002px;transform:scaleX(0.925);transform-origin:0 0;color:#222;font-size:6.7px;-webkit-text-stroke:0.08px #222">Organizace a řízení</div>
<div class="ab" style="left:25.5px;top:107.53999999999999px;width:3px;height:0.7px;background:#c8c8c8"></div>
<svg class="ab" style="left:21px;top:105.34px" width="5" height="5" viewBox="0 0 5 5"><rect x="0.35" y="0.35" width="4.3" height="4.3" fill="#fbfbfb" stroke="#b4b4b4" stroke-width="0.7"/><path d="M1.3 2.5 H3.7 M2.5 1.3 V3.7" stroke="#3a4a6a" stroke-width="0.6"/></svg>
<svg class="ab" style="left:28px;top:104.74000000000001px" width="8" height="6.2" viewBox="0 0 8 6.2"><defs><linearGradient id="fg" x1="0" y1="0" x2="1" y2="1"><stop offset="0" stop-color="#b8e2f4"/><stop offset=".6" stop-color="#5fb2da"/><stop offset="1" stop-color="#2b7fb0"/></linearGradient></defs><path d="M0 0 H3.6 L4.3 0.9 H7.8 V6.2 H0Z" fill="url(#fg)"/><rect x="0" y="5.3" width="7.8" height="0.9" fill="#2a6f98" opacity=".7"/><rect x="0.6" y="1.6" width="2.5" height="3" fill="#fff" opacity=".25"/></svg>
<div class="t" style="left:38.5px;top:104.24000000000001px;transform:scaleX(0.925);transform-origin:0 0;color:#222;font-size:6.7px;-webkit-text-stroke:0.08px #222">Prodej a nákup</div>
<div class="ab" style="left:25.5px;top:116.10999999999999px;width:3px;height:0.7px;background:#c8c8c8"></div>
<svg class="ab" style="left:21px;top:113.91px" width="5" height="5" viewBox="0 0 5 5"><rect x="0.35" y="0.35" width="4.3" height="4.3" fill="#fbfbfb" stroke="#b4b4b4" stroke-width="0.7"/><path d="M1.3 2.5 H3.7" stroke="#3a4a6a" stroke-width="0.6"/></svg>
<svg class="ab" style="left:28px;top:113.31px" width="8" height="6.2" viewBox="0 0 8 6.2"><defs><linearGradient id="fg" x1="0" y1="0" x2="1" y2="1"><stop offset="0" stop-color="#b8e2f4"/><stop offset=".6" stop-color="#5fb2da"/><stop offset="1" stop-color="#2b7fb0"/></linearGradient></defs><path d="M0 0 H3.6 L4.3 0.9 H7.8 V6.2 H0Z" fill="url(#fg)"/><rect x="0" y="5.3" width="7.8" height="0.9" fill="#2a6f98" opacity=".7"/><rect x="0.6" y="1.6" width="2.5" height="3" fill="#fff" opacity=".25"/></svg>
<div class="t" style="left:38.5px;top:112.81px;transform:scaleX(0.925);transform-origin:0 0;color:#222;font-size:6.7px;-webkit-text-stroke:0.08px #222">Řízení vztahů se zákazníky (CRM)</div>
<div class="ab" style="left:34.5px;top:124.68px;width:3px;height:0.7px;background:#c8c8c8"></div>
<svg class="ab" style="left:30px;top:122.48000000000002px" width="5" height="5" viewBox="0 0 5 5"><rect x="0.35" y="0.35" width="4.3" height="4.3" fill="#fbfbfb" stroke="#b4b4b4" stroke-width="0.7"/><path d="M1.3 2.5 H3.7 M2.5 1.3 V3.7" stroke="#3a4a6a" stroke-width="0.6"/></svg>
<svg class="ab" style="left:37px;top:121.88000000000002px" width="8" height="6.2" viewBox="0 0 8 6.2"><defs><linearGradient id="fg" x1="0" y1="0" x2="1" y2="1"><stop offset="0" stop-color="#b8e2f4"/><stop offset=".6" stop-color="#5fb2da"/><stop offset="1" stop-color="#2b7fb0"/></linearGradient></defs><path d="M0 0 H3.6 L4.3 0.9 H7.8 V6.2 H0Z" fill="url(#fg)"/><rect x="0" y="5.3" width="7.8" height="0.9" fill="#2a6f98" opacity=".7"/><rect x="0.6" y="1.6" width="2.5" height="3" fill="#fff" opacity=".25"/></svg>
<div class="t" style="left:47.5px;top:121.38000000000002px;transform:scaleX(0.925);transform-origin:0 0;color:#222;font-size:6.7px;-webkit-text-stroke:0.08px #222">Číselníky - Řízení vztahů se zákazníky (CRM)</div>
<div class="ab" style="left:33px;top:133.25px;width:5px;height:0.7px;background:#c8c8c8"></div>
<svg class="ab" style="left:39.3px;top:130.55px" width="4" height="6" viewBox="0 0 4 6"><path d="M0.2 0.2 L3.7 3 L0.2 5.8Z" fill="#1d5f8a"/></svg>
<div class="t" style="left:47.5px;top:129.95000000000002px;transform:scaleX(0.925);transform-origin:0 0;color:#222;font-size:6.7px;-webkit-text-stroke:0.08px #222">Seznam členů organizací</div>
<div class="ab" style="left:33px;top:141.82px;width:5px;height:0.7px;background:#c8c8c8"></div>
<svg class="ab" style="left:39.3px;top:139.12px" width="4" height="6" viewBox="0 0 4 6"><path d="M0.2 0.2 L3.7 3 L0.2 5.8Z" fill="#1d5f8a"/></svg>
<div class="t" style="left:47.5px;top:138.52px;transform:scaleX(0.925);transform-origin:0 0;color:#222;font-size:6.7px;-webkit-text-stroke:0.08px #222">Seznam spojení</div>
<div class="ab" style="left:33px;top:150.39px;width:5px;height:0.7px;background:#c8c8c8"></div>
<svg class="ab" style="left:39.3px;top:147.69px" width="4" height="6" viewBox="0 0 4 6"><path d="M0.2 0.2 L3.7 3 L0.2 5.8Z" fill="#1d5f8a"/></svg>
<div class="t" style="left:47.5px;top:147.09px;transform:scaleX(0.925);transform-origin:0 0;color:#222;font-size:6.7px;-webkit-text-stroke:0.08px #222">Jednání s partnery</div>
<div class="ab" style="left:33px;top:158.95999999999998px;width:5px;height:0.7px;background:#c8c8c8"></div>
<svg class="ab" style="left:39.3px;top:156.26px" width="4" height="6" viewBox="0 0 4 6"><path d="M0.2 0.2 L3.7 3 L0.2 5.8Z" fill="#1d5f8a"/></svg>
<div class="t" style="left:47.5px;top:155.66px;transform:scaleX(0.925);transform-origin:0 0;color:#222;font-size:6.7px;-webkit-text-stroke:0.08px #222">Podněty</div>
<div class="ab" style="left:33px;top:167.53px;width:5px;height:0.7px;background:#c8c8c8"></div>
<svg class="ab" style="left:39.3px;top:164.83px" width="4" height="6" viewBox="0 0 4 6"><path d="M0.2 0.2 L3.7 3 L0.2 5.8Z" fill="#1d5f8a"/></svg>
<div class="t" style="left:47.5px;top:164.23000000000002px;transform:scaleX(0.925);transform-origin:0 0;color:#222;font-size:6.7px;-webkit-text-stroke:0.08px #222">Obchodní případy</div>
<div class="ab" style="left:33px;top:176.1px;width:5px;height:0.7px;background:#c8c8c8"></div>
<svg class="ab" style="left:39.3px;top:173.4px" width="4" height="6" viewBox="0 0 4 6"><path d="M0.2 0.2 L3.7 3 L0.2 5.8Z" fill="#1d5f8a"/></svg>
<div class="t" style="left:47.5px;top:172.8px;transform:scaleX(0.925);transform-origin:0 0;color:#222;font-size:6.7px;-webkit-text-stroke:0.08px #222">Telefonní hovory</div>
<div class="ab" style="left:33px;top:184.67px;width:5px;height:0.7px;background:#c8c8c8"></div>
<svg class="ab" style="left:39.3px;top:181.97px" width="4" height="6" viewBox="0 0 4 6"><path d="M0.2 0.2 L3.7 3 L0.2 5.8Z" fill="#1d5f8a"/></svg>
<div class="t" style="left:47.5px;top:181.37px;transform:scaleX(0.925);transform-origin:0 0;color:#222;font-size:6.7px;-webkit-text-stroke:0.08px #222">Výročí</div>
<div class="ab" style="left:33px;top:193.24px;width:5px;height:0.7px;background:#c8c8c8"></div>
<svg class="ab" style="left:39.3px;top:190.54000000000002px" width="4" height="6" viewBox="0 0 4 6"><path d="M0.2 0.2 L3.7 3 L0.2 5.8Z" fill="#1d5f8a"/></svg>
<div class="t" style="left:47.5px;top:189.94000000000003px;transform:scaleX(0.925);transform-origin:0 0;color:#222;font-size:6.7px;-webkit-text-stroke:0.08px #222">Marketingové akce</div>
<div class="ab" style="left:33px;top:201.81px;width:5px;height:0.7px;background:#c8c8c8"></div>
<svg class="ab" style="left:39.3px;top:199.11px" width="4" height="6" viewBox="0 0 4 6"><path d="M0.2 0.2 L3.7 3 L0.2 5.8Z" fill="#1d5f8a"/></svg>
<div class="t" style="left:47.5px;top:198.51000000000002px;transform:scaleX(0.925);transform-origin:0 0;color:#222;font-size:6.7px;-webkit-text-stroke:0.08px #222">Vyhodnocení účastí na marketingových akcích</div>
<div class="ab" style="left:34.5px;top:210.38px;width:3px;height:0.7px;background:#c8c8c8"></div>
<svg class="ab" style="left:30px;top:208.18px" width="5" height="5" viewBox="0 0 5 5"><rect x="0.35" y="0.35" width="4.3" height="4.3" fill="#fbfbfb" stroke="#b4b4b4" stroke-width="0.7"/><path d="M1.3 2.5 H3.7 M2.5 1.3 V3.7" stroke="#3a4a6a" stroke-width="0.6"/></svg>
<svg class="ab" style="left:37px;top:207.57999999999998px" width="8" height="6.2" viewBox="0 0 8 6.2"><defs><linearGradient id="fg" x1="0" y1="0" x2="1" y2="1"><stop offset="0" stop-color="#b8e2f4"/><stop offset=".6" stop-color="#5fb2da"/><stop offset="1" stop-color="#2b7fb0"/></linearGradient></defs><path d="M0 0 H3.6 L4.3 0.9 H7.8 V6.2 H0Z" fill="url(#fg)"/><rect x="0" y="5.3" width="7.8" height="0.9" fill="#2a6f98" opacity=".7"/><rect x="0.6" y="1.6" width="2.5" height="3" fill="#fff" opacity=".25"/></svg>
<div class="t" style="left:47.5px;top:207.07999999999998px;transform:scaleX(0.925);transform-origin:0 0;color:#222;font-size:6.7px;-webkit-text-stroke:0.08px #222">Vyhodnocení</div>
<div class="ab" style="left:25.5px;top:218.95px;width:3px;height:0.7px;background:#c8c8c8"></div>
<svg class="ab" style="left:21px;top:216.75px" width="5" height="5" viewBox="0 0 5 5"><rect x="0.35" y="0.35" width="4.3" height="4.3" fill="#fbfbfb" stroke="#b4b4b4" stroke-width="0.7"/><path d="M1.3 2.5 H3.7 M2.5 1.3 V3.7" stroke="#3a4a6a" stroke-width="0.6"/></svg>
<svg class="ab" style="left:28px;top:216.14999999999998px" width="8" height="6.2" viewBox="0 0 8 6.2"><defs><linearGradient id="fg" x1="0" y1="0" x2="1" y2="1"><stop offset="0" stop-color="#b8e2f4"/><stop offset=".6" stop-color="#5fb2da"/><stop offset="1" stop-color="#2b7fb0"/></linearGradient></defs><path d="M0 0 H3.6 L4.3 0.9 H7.8 V6.2 H0Z" fill="url(#fg)"/><rect x="0" y="5.3" width="7.8" height="0.9" fill="#2a6f98" opacity=".7"/><rect x="0.6" y="1.6" width="2.5" height="3" fill="#fff" opacity=".25"/></svg>
<div class="t" style="left:38.5px;top:215.64999999999998px;transform:scaleX(0.925);transform-origin:0 0;color:#222;font-size:6.7px;-webkit-text-stroke:0.08px #222">Komunikace s partnery</div>
<div class="ab" style="left:25.5px;top:227.51999999999998px;width:3px;height:0.7px;background:#c8c8c8"></div>
<svg class="ab" style="left:21px;top:225.32px" width="5" height="5" viewBox="0 0 5 5"><rect x="0.35" y="0.35" width="4.3" height="4.3" fill="#fbfbfb" stroke="#b4b4b4" stroke-width="0.7"/><path d="M1.3 2.5 H3.7 M2.5 1.3 V3.7" stroke="#3a4a6a" stroke-width="0.6"/></svg>
<svg class="ab" style="left:28px;top:224.71999999999997px" width="8" height="6.2" viewBox="0 0 8 6.2"><defs><linearGradient id="fg" x1="0" y1="0" x2="1" y2="1"><stop offset="0" stop-color="#b8e2f4"/><stop offset=".6" stop-color="#5fb2da"/><stop offset="1" stop-color="#2b7fb0"/></linearGradient></defs><path d="M0 0 H3.6 L4.3 0.9 H7.8 V6.2 H0Z" fill="url(#fg)"/><rect x="0" y="5.3" width="7.8" height="0.9" fill="#2a6f98" opacity=".7"/><rect x="0.6" y="1.6" width="2.5" height="3" fill="#fff" opacity=".25"/></svg>
<div class="t" style="left:38.5px;top:224.21999999999997px;transform:scaleX(0.925);transform-origin:0 0;color:#222;font-size:6.7px;-webkit-text-stroke:0.08px #222">Publikační systém</div>
<div class="ab" style="left:25.5px;top:236.08999999999997px;width:3px;height:0.7px;background:#c8c8c8"></div>
<svg class="ab" style="left:21px;top:233.89px" width="5" height="5" viewBox="0 0 5 5"><rect x="0.35" y="0.35" width="4.3" height="4.3" fill="#fbfbfb" stroke="#b4b4b4" stroke-width="0.7"/><path d="M1.3 2.5 H3.7 M2.5 1.3 V3.7" stroke="#3a4a6a" stroke-width="0.6"/></svg>
<svg class="ab" style="left:28px;top:233.28999999999996px" width="8" height="6.2" viewBox="0 0 8 6.2"><defs><linearGradient id="fg" x1="0" y1="0" x2="1" y2="1"><stop offset="0" stop-color="#b8e2f4"/><stop offset=".6" stop-color="#5fb2da"/><stop offset="1" stop-color="#2b7fb0"/></linearGradient></defs><path d="M0 0 H3.6 L4.3 0.9 H7.8 V6.2 H0Z" fill="url(#fg)"/><rect x="0" y="5.3" width="7.8" height="0.9" fill="#2a6f98" opacity=".7"/><rect x="0.6" y="1.6" width="2.5" height="3" fill="#fff" opacity=".25"/></svg>
<div class="t" style="left:38.5px;top:232.78999999999996px;transform:scaleX(0.925);transform-origin:0 0;color:#222;font-size:6.7px;-webkit-text-stroke:0.08px #222">Finance</div>
<div class="ab" style="left:25.5px;top:244.66000000000003px;width:3px;height:0.7px;background:#c8c8c8"></div>
<svg class="ab" style="left:21px;top:242.46000000000004px" width="5" height="5" viewBox="0 0 5 5"><rect x="0.35" y="0.35" width="4.3" height="4.3" fill="#fbfbfb" stroke="#b4b4b4" stroke-width="0.7"/><path d="M1.3 2.5 H3.7 M2.5 1.3 V3.7" stroke="#3a4a6a" stroke-width="0.6"/></svg>
<svg class="ab" style="left:28px;top:241.86px" width="8" height="6.2" viewBox="0 0 8 6.2"><defs><linearGradient id="fg" x1="0" y1="0" x2="1" y2="1"><stop offset="0" stop-color="#b8e2f4"/><stop offset=".6" stop-color="#5fb2da"/><stop offset="1" stop-color="#2b7fb0"/></linearGradient></defs><path d="M0 0 H3.6 L4.3 0.9 H7.8 V6.2 H0Z" fill="url(#fg)"/><rect x="0" y="5.3" width="7.8" height="0.9" fill="#2a6f98" opacity=".7"/><rect x="0.6" y="1.6" width="2.5" height="3" fill="#fff" opacity=".25"/></svg>
<div class="t" style="left:38.5px;top:241.36px;transform:scaleX(0.925);transform-origin:0 0;color:#222;font-size:6.7px;-webkit-text-stroke:0.08px #222">Podvojné účetnictví</div>
<div class="ab" style="left:25.5px;top:253.22999999999996px;width:3px;height:0.7px;background:#c8c8c8"></div>
<svg class="ab" style="left:21px;top:251.02999999999997px" width="5" height="5" viewBox="0 0 5 5"><rect x="0.35" y="0.35" width="4.3" height="4.3" fill="#fbfbfb" stroke="#b4b4b4" stroke-width="0.7"/><path d="M1.3 2.5 H3.7 M2.5 1.3 V3.7" stroke="#3a4a6a" stroke-width="0.6"/></svg>
<svg class="ab" style="left:28px;top:250.42999999999995px" width="8" height="6.2" viewBox="0 0 8 6.2"><defs><linearGradient id="fg" x1="0" y1="0" x2="1" y2="1"><stop offset="0" stop-color="#b8e2f4"/><stop offset=".6" stop-color="#5fb2da"/><stop offset="1" stop-color="#2b7fb0"/></linearGradient></defs><path d="M0 0 H3.6 L4.3 0.9 H7.8 V6.2 H0Z" fill="url(#fg)"/><rect x="0" y="5.3" width="7.8" height="0.9" fill="#2a6f98" opacity=".7"/><rect x="0.6" y="1.6" width="2.5" height="3" fill="#fff" opacity=".25"/></svg>
<div class="t" style="left:38.5px;top:249.92999999999995px;transform:scaleX(0.925);transform-origin:0 0;color:#222;font-size:6.7px;-webkit-text-stroke:0.08px #222">Sklady</div>
<div class="ab" style="left:25.5px;top:261.8px;width:3px;height:0.7px;background:#c8c8c8"></div>
<svg class="ab" style="left:21px;top:259.6px" width="5" height="5" viewBox="0 0 5 5"><rect x="0.35" y="0.35" width="4.3" height="4.3" fill="#fbfbfb" stroke="#b4b4b4" stroke-width="0.7"/><path d="M1.3 2.5 H3.7 M2.5 1.3 V3.7" stroke="#3a4a6a" stroke-width="0.6"/></svg>
<svg class="ab" style="left:28px;top:259.0px" width="8" height="6.2" viewBox="0 0 8 6.2"><defs><linearGradient id="fg" x1="0" y1="0" x2="1" y2="1"><stop offset="0" stop-color="#b8e2f4"/><stop offset=".6" stop-color="#5fb2da"/><stop offset="1" stop-color="#2b7fb0"/></linearGradient></defs><path d="M0 0 H3.6 L4.3 0.9 H7.8 V6.2 H0Z" fill="url(#fg)"/><rect x="0" y="5.3" width="7.8" height="0.9" fill="#2a6f98" opacity=".7"/><rect x="0.6" y="1.6" width="2.5" height="3" fill="#fff" opacity=".25"/></svg>
<div class="t" style="left:38.5px;top:258.5px;transform:scaleX(0.925);transform-origin:0 0;color:#222;font-size:6.7px;-webkit-text-stroke:0.08px #222">Doprava</div>
<div class="ab" style="left:25.5px;top:270.37px;width:3px;height:0.7px;background:#c8c8c8"></div>
<svg class="ab" style="left:21px;top:268.17px" width="5" height="5" viewBox="0 0 5 5"><rect x="0.35" y="0.35" width="4.3" height="4.3" fill="#fbfbfb" stroke="#b4b4b4" stroke-width="0.7"/><path d="M1.3 2.5 H3.7 M2.5 1.3 V3.7" stroke="#3a4a6a" stroke-width="0.6"/></svg>
<svg class="ab" style="left:28px;top:267.57px" width="8" height="6.2" viewBox="0 0 8 6.2"><defs><linearGradient id="fg" x1="0" y1="0" x2="1" y2="1"><stop offset="0" stop-color="#b8e2f4"/><stop offset=".6" stop-color="#5fb2da"/><stop offset="1" stop-color="#2b7fb0"/></linearGradient></defs><path d="M0 0 H3.6 L4.3 0.9 H7.8 V6.2 H0Z" fill="url(#fg)"/><rect x="0" y="5.3" width="7.8" height="0.9" fill="#2a6f98" opacity=".7"/><rect x="0.6" y="1.6" width="2.5" height="3" fill="#fff" opacity=".25"/></svg>
<div class="t" style="left:38.5px;top:267.07px;transform:scaleX(0.925);transform-origin:0 0;color:#222;font-size:6.7px;-webkit-text-stroke:0.08px #222">Personalistika</div>
<div class="ab" style="left:25.5px;top:278.94px;width:3px;height:0.7px;background:#c8c8c8"></div>
<svg class="ab" style="left:21px;top:276.74px" width="5" height="5" viewBox="0 0 5 5"><rect x="0.35" y="0.35" width="4.3" height="4.3" fill="#fbfbfb" stroke="#b4b4b4" stroke-width="0.7"/><path d="M1.3 2.5 H3.7 M2.5 1.3 V3.7" stroke="#3a4a6a" stroke-width="0.6"/></svg>
<svg class="ab" style="left:28px;top:276.14px" width="8" height="6.2" viewBox="0 0 8 6.2"><defs><linearGradient id="fg" x1="0" y1="0" x2="1" y2="1"><stop offset="0" stop-color="#b8e2f4"/><stop offset=".6" stop-color="#5fb2da"/><stop offset="1" stop-color="#2b7fb0"/></linearGradient></defs><path d="M0 0 H3.6 L4.3 0.9 H7.8 V6.2 H0Z" fill="url(#fg)"/><rect x="0" y="5.3" width="7.8" height="0.9" fill="#2a6f98" opacity=".7"/><rect x="0.6" y="1.6" width="2.5" height="3" fill="#fff" opacity=".25"/></svg>
<div class="t" style="left:38.5px;top:275.64px;transform:scaleX(0.925);transform-origin:0 0;color:#222;font-size:6.7px;-webkit-text-stroke:0.08px #222">Mzdy</div>
<div class="ab" style="left:25.5px;top:287.51px;width:3px;height:0.7px;background:#c8c8c8"></div>
<svg class="ab" style="left:21px;top:285.31px" width="5" height="5" viewBox="0 0 5 5"><rect x="0.35" y="0.35" width="4.3" height="4.3" fill="#fbfbfb" stroke="#b4b4b4" stroke-width="0.7"/><path d="M1.3 2.5 H3.7 M2.5 1.3 V3.7" stroke="#3a4a6a" stroke-width="0.6"/></svg>
<svg class="ab" style="left:28px;top:284.71px" width="8" height="6.2" viewBox="0 0 8 6.2"><defs><linearGradient id="fg" x1="0" y1="0" x2="1" y2="1"><stop offset="0" stop-color="#b8e2f4"/><stop offset=".6" stop-color="#5fb2da"/><stop offset="1" stop-color="#2b7fb0"/></linearGradient></defs><path d="M0 0 H3.6 L4.3 0.9 H7.8 V6.2 H0Z" fill="url(#fg)"/><rect x="0" y="5.3" width="7.8" height="0.9" fill="#2a6f98" opacity=".7"/><rect x="0.6" y="1.6" width="2.5" height="3" fill="#fff" opacity=".25"/></svg>
<div class="t" style="left:38.5px;top:284.21px;transform:scaleX(0.925);transform-origin:0 0;color:#222;font-size:6.7px;-webkit-text-stroke:0.08px #222">Majetek</div>
<div class="ab" style="left:25.5px;top:296.08px;width:3px;height:0.7px;background:#c8c8c8"></div>
<svg class="ab" style="left:21px;top:293.88px" width="5" height="5" viewBox="0 0 5 5"><rect x="0.35" y="0.35" width="4.3" height="4.3" fill="#fbfbfb" stroke="#b4b4b4" stroke-width="0.7"/><path d="M1.3 2.5 H3.7 M2.5 1.3 V3.7" stroke="#3a4a6a" stroke-width="0.6"/></svg>
<svg class="ab" style="left:28px;top:293.28px" width="8" height="6.2" viewBox="0 0 8 6.2"><defs><linearGradient id="fg" x1="0" y1="0" x2="1" y2="1"><stop offset="0" stop-color="#b8e2f4"/><stop offset=".6" stop-color="#5fb2da"/><stop offset="1" stop-color="#2b7fb0"/></linearGradient></defs><path d="M0 0 H3.6 L4.3 0.9 H7.8 V6.2 H0Z" fill="url(#fg)"/><rect x="0" y="5.3" width="7.8" height="0.9" fill="#2a6f98" opacity=".7"/><rect x="0.6" y="1.6" width="2.5" height="3" fill="#fff" opacity=".25"/></svg>
<div class="t" style="left:38.5px;top:292.78px;transform:scaleX(0.925);transform-origin:0 0;color:#222;font-size:6.7px;-webkit-text-stroke:0.08px #222">Procesy, workflow</div>
<div class="ab" style="left:25.5px;top:304.65px;width:3px;height:0.7px;background:#c8c8c8"></div>
<svg class="ab" style="left:21px;top:302.45px" width="5" height="5" viewBox="0 0 5 5"><rect x="0.35" y="0.35" width="4.3" height="4.3" fill="#fbfbfb" stroke="#b4b4b4" stroke-width="0.7"/><path d="M1.3 2.5 H3.7 M2.5 1.3 V3.7" stroke="#3a4a6a" stroke-width="0.6"/></svg>
<svg class="ab" style="left:28px;top:301.84999999999997px" width="8" height="6.2" viewBox="0 0 8 6.2"><defs><linearGradient id="fg" x1="0" y1="0" x2="1" y2="1"><stop offset="0" stop-color="#b8e2f4"/><stop offset=".6" stop-color="#5fb2da"/><stop offset="1" stop-color="#2b7fb0"/></linearGradient></defs><path d="M0 0 H3.6 L4.3 0.9 H7.8 V6.2 H0Z" fill="url(#fg)"/><rect x="0" y="5.3" width="7.8" height="0.9" fill="#2a6f98" opacity=".7"/><rect x="0.6" y="1.6" width="2.5" height="3" fill="#fff" opacity=".25"/></svg>
<div class="t" style="left:38.5px;top:301.34999999999997px;transform:scaleX(0.925);transform-origin:0 0;color:#222;font-size:6.7px;-webkit-text-stroke:0.08px #222">Projekty</div>
<div class="ab" style="left:25.5px;top:313.21999999999997px;width:3px;height:0.7px;background:#c8c8c8"></div>
<svg class="ab" style="left:21px;top:311.02px" width="5" height="5" viewBox="0 0 5 5"><rect x="0.35" y="0.35" width="4.3" height="4.3" fill="#fbfbfb" stroke="#b4b4b4" stroke-width="0.7"/><path d="M1.3 2.5 H3.7 M2.5 1.3 V3.7" stroke="#3a4a6a" stroke-width="0.6"/></svg>
<svg class="ab" style="left:28px;top:310.41999999999996px" width="8" height="6.2" viewBox="0 0 8 6.2"><defs><linearGradient id="fg" x1="0" y1="0" x2="1" y2="1"><stop offset="0" stop-color="#b8e2f4"/><stop offset=".6" stop-color="#5fb2da"/><stop offset="1" stop-color="#2b7fb0"/></linearGradient></defs><path d="M0 0 H3.6 L4.3 0.9 H7.8 V6.2 H0Z" fill="url(#fg)"/><rect x="0" y="5.3" width="7.8" height="0.9" fill="#2a6f98" opacity=".7"/><rect x="0.6" y="1.6" width="2.5" height="3" fill="#fff" opacity=".25"/></svg>
<div class="t" style="left:38.5px;top:309.91999999999996px;transform:scaleX(0.925);transform-origin:0 0;color:#222;font-size:6.7px;-webkit-text-stroke:0.08px #222">Plánování</div>
<div class="ab" style="left:25.5px;top:321.79px;width:3px;height:0.7px;background:#c8c8c8"></div>
<svg class="ab" style="left:21px;top:319.59000000000003px" width="5" height="5" viewBox="0 0 5 5"><rect x="0.35" y="0.35" width="4.3" height="4.3" fill="#fbfbfb" stroke="#b4b4b4" stroke-width="0.7"/><path d="M1.3 2.5 H3.7 M2.5 1.3 V3.7" stroke="#3a4a6a" stroke-width="0.6"/></svg>
<svg class="ab" style="left:28px;top:318.99px" width="8" height="6.2" viewBox="0 0 8 6.2"><defs><linearGradient id="fg" x1="0" y1="0" x2="1" y2="1"><stop offset="0" stop-color="#b8e2f4"/><stop offset=".6" stop-color="#5fb2da"/><stop offset="1" stop-color="#2b7fb0"/></linearGradient></defs><path d="M0 0 H3.6 L4.3 0.9 H7.8 V6.2 H0Z" fill="url(#fg)"/><rect x="0" y="5.3" width="7.8" height="0.9" fill="#2a6f98" opacity=".7"/><rect x="0.6" y="1.6" width="2.5" height="3" fill="#fff" opacity=".25"/></svg>
<div class="t" style="left:38.5px;top:318.49px;transform:scaleX(0.925);transform-origin:0 0;color:#222;font-size:6.7px;-webkit-text-stroke:0.08px #222">Servis</div>
<div class="ab" style="left:25.5px;top:330.36px;width:3px;height:0.7px;background:#c8c8c8"></div>
<svg class="ab" style="left:21px;top:328.16px" width="5" height="5" viewBox="0 0 5 5"><rect x="0.35" y="0.35" width="4.3" height="4.3" fill="#fbfbfb" stroke="#b4b4b4" stroke-width="0.7"/><path d="M1.3 2.5 H3.7 M2.5 1.3 V3.7" stroke="#3a4a6a" stroke-width="0.6"/></svg>
<svg class="ab" style="left:28px;top:327.56px" width="8" height="6.2" viewBox="0 0 8 6.2"><defs><linearGradient id="fg" x1="0" y1="0" x2="1" y2="1"><stop offset="0" stop-color="#b8e2f4"/><stop offset=".6" stop-color="#5fb2da"/><stop offset="1" stop-color="#2b7fb0"/></linearGradient></defs><path d="M0 0 H3.6 L4.3 0.9 H7.8 V6.2 H0Z" fill="url(#fg)"/><rect x="0" y="5.3" width="7.8" height="0.9" fill="#2a6f98" opacity=".7"/><rect x="0.6" y="1.6" width="2.5" height="3" fill="#fff" opacity=".25"/></svg>
<div class="t" style="left:38.5px;top:327.06px;transform:scaleX(0.925);transform-origin:0 0;color:#222;font-size:6.7px;-webkit-text-stroke:0.08px #222">Výroba</div>
<div class="ab" style="left:25.5px;top:338.93px;width:3px;height:0.7px;background:#c8c8c8"></div>
<svg class="ab" style="left:21px;top:336.73px" width="5" height="5" viewBox="0 0 5 5"><rect x="0.35" y="0.35" width="4.3" height="4.3" fill="#fbfbfb" stroke="#b4b4b4" stroke-width="0.7"/><path d="M1.3 2.5 H3.7 M2.5 1.3 V3.7" stroke="#3a4a6a" stroke-width="0.6"/></svg>
<svg class="ab" style="left:28px;top:336.13px" width="8" height="6.2" viewBox="0 0 8 6.2"><defs><linearGradient id="fg" x1="0" y1="0" x2="1" y2="1"><stop offset="0" stop-color="#b8e2f4"/><stop offset=".6" stop-color="#5fb2da"/><stop offset="1" stop-color="#2b7fb0"/></linearGradient></defs><path d="M0 0 H3.6 L4.3 0.9 H7.8 V6.2 H0Z" fill="url(#fg)"/><rect x="0" y="5.3" width="7.8" height="0.9" fill="#2a6f98" opacity=".7"/><rect x="0.6" y="1.6" width="2.5" height="3" fill="#fff" opacity=".25"/></svg>
<div class="t" style="left:38.5px;top:335.63px;transform:scaleX(0.925);transform-origin:0 0;color:#222;font-size:6.7px;-webkit-text-stroke:0.08px #222">Nářadí</div>
<div class="ab" style="left:25.5px;top:347.5px;width:3px;height:0.7px;background:#c8c8c8"></div>
<svg class="ab" style="left:21px;top:345.3px" width="5" height="5" viewBox="0 0 5 5"><rect x="0.35" y="0.35" width="4.3" height="4.3" fill="#fbfbfb" stroke="#b4b4b4" stroke-width="0.7"/><path d="M1.3 2.5 H3.7 M2.5 1.3 V3.7" stroke="#3a4a6a" stroke-width="0.6"/></svg>
<svg class="ab" style="left:28px;top:344.7px" width="8" height="6.2" viewBox="0 0 8 6.2"><defs><linearGradient id="fg" x1="0" y1="0" x2="1" y2="1"><stop offset="0" stop-color="#b8e2f4"/><stop offset=".6" stop-color="#5fb2da"/><stop offset="1" stop-color="#2b7fb0"/></linearGradient></defs><path d="M0 0 H3.6 L4.3 0.9 H7.8 V6.2 H0Z" fill="url(#fg)"/><rect x="0" y="5.3" width="7.8" height="0.9" fill="#2a6f98" opacity=".7"/><rect x="0.6" y="1.6" width="2.5" height="3" fill="#fff" opacity=".25"/></svg>
<div class="t" style="left:38.5px;top:344.2px;transform:scaleX(0.925);transform-origin:0 0;color:#222;font-size:6.7px;-webkit-text-stroke:0.08px #222">Kompletace</div>
<div class="ab" style="left:25.5px;top:356.07px;width:3px;height:0.7px;background:#c8c8c8"></div>
<svg class="ab" style="left:21px;top:353.87px" width="5" height="5" viewBox="0 0 5 5"><rect x="0.35" y="0.35" width="4.3" height="4.3" fill="#fbfbfb" stroke="#b4b4b4" stroke-width="0.7"/><path d="M1.3 2.5 H3.7 M2.5 1.3 V3.7" stroke="#3a4a6a" stroke-width="0.6"/></svg>
<svg class="ab" style="left:28px;top:353.27px" width="8" height="6.2" viewBox="0 0 8 6.2"><defs><linearGradient id="fg" x1="0" y1="0" x2="1" y2="1"><stop offset="0" stop-color="#b8e2f4"/><stop offset=".6" stop-color="#5fb2da"/><stop offset="1" stop-color="#2b7fb0"/></linearGradient></defs><path d="M0 0 H3.6 L4.3 0.9 H7.8 V6.2 H0Z" fill="url(#fg)"/><rect x="0" y="5.3" width="7.8" height="0.9" fill="#2a6f98" opacity=".7"/><rect x="0.6" y="1.6" width="2.5" height="3" fill="#fff" opacity=".25"/></svg>
<div class="t" style="left:38.5px;top:352.77px;transform:scaleX(0.925);transform-origin:0 0;color:#222;font-size:6.7px;-webkit-text-stroke:0.08px #222">Evidence instalací softwaru</div>
<div class="ab" style="left:25.5px;top:364.64px;width:3px;height:0.7px;background:#c8c8c8"></div>
<svg class="ab" style="left:21px;top:362.44px" width="5" height="5" viewBox="0 0 5 5"><rect x="0.35" y="0.35" width="4.3" height="4.3" fill="#fbfbfb" stroke="#b4b4b4" stroke-width="0.7"/><path d="M1.3 2.5 H3.7 M2.5 1.3 V3.7" stroke="#3a4a6a" stroke-width="0.6"/></svg>
<svg class="ab" style="left:28px;top:361.84px" width="8" height="6.2" viewBox="0 0 8 6.2"><defs><linearGradient id="fg" x1="0" y1="0" x2="1" y2="1"><stop offset="0" stop-color="#b8e2f4"/><stop offset=".6" stop-color="#5fb2da"/><stop offset="1" stop-color="#2b7fb0"/></linearGradient></defs><path d="M0 0 H3.6 L4.3 0.9 H7.8 V6.2 H0Z" fill="url(#fg)"/><rect x="0" y="5.3" width="7.8" height="0.9" fill="#2a6f98" opacity=".7"/><rect x="0.6" y="1.6" width="2.5" height="3" fill="#fff" opacity=".25"/></svg>
<div class="t" style="left:38.5px;top:361.34px;transform:scaleX(0.925);transform-origin:0 0;color:#222;font-size:6.7px;-webkit-text-stroke:0.08px #222">Knowledge management</div>
<div class="ab" style="left:25.5px;top:373.21px;width:3px;height:0.7px;background:#c8c8c8"></div>
<svg class="ab" style="left:21px;top:371.01px" width="5" height="5" viewBox="0 0 5 5"><rect x="0.35" y="0.35" width="4.3" height="4.3" fill="#fbfbfb" stroke="#b4b4b4" stroke-width="0.7"/><path d="M1.3 2.5 H3.7 M2.5 1.3 V3.7" stroke="#3a4a6a" stroke-width="0.6"/></svg>
<svg class="ab" style="left:28px;top:370.40999999999997px" width="8" height="6.2" viewBox="0 0 8 6.2"><defs><linearGradient id="fg" x1="0" y1="0" x2="1" y2="1"><stop offset="0" stop-color="#b8e2f4"/><stop offset=".6" stop-color="#5fb2da"/><stop offset="1" stop-color="#2b7fb0"/></linearGradient></defs><path d="M0 0 H3.6 L4.3 0.9 H7.8 V6.2 H0Z" fill="url(#fg)"/><rect x="0" y="5.3" width="7.8" height="0.9" fill="#2a6f98" opacity=".7"/><rect x="0.6" y="1.6" width="2.5" height="3" fill="#fff" opacity=".25"/></svg>
<div class="t" style="left:38.5px;top:369.90999999999997px;transform:scaleX(0.925);transform-origin:0 0;color:#222;font-size:6.7px;-webkit-text-stroke:0.08px #222">Správa dokumentů (DMS)</div>
<div class="ab" style="left:25.5px;top:381.78000000000003px;width:3px;height:0.7px;background:#c8c8c8"></div>
<svg class="ab" style="left:21px;top:379.58000000000004px" width="5" height="5" viewBox="0 0 5 5"><rect x="0.35" y="0.35" width="4.3" height="4.3" fill="#fbfbfb" stroke="#b4b4b4" stroke-width="0.7"/><path d="M1.3 2.5 H3.7 M2.5 1.3 V3.7" stroke="#3a4a6a" stroke-width="0.6"/></svg>
<svg class="ab" style="left:28px;top:378.98px" width="8" height="6.2" viewBox="0 0 8 6.2"><defs><linearGradient id="fg" x1="0" y1="0" x2="1" y2="1"><stop offset="0" stop-color="#b8e2f4"/><stop offset=".6" stop-color="#5fb2da"/><stop offset="1" stop-color="#2b7fb0"/></linearGradient></defs><path d="M0 0 H3.6 L4.3 0.9 H7.8 V6.2 H0Z" fill="url(#fg)"/><rect x="0" y="5.3" width="7.8" height="0.9" fill="#2a6f98" opacity=".7"/><rect x="0.6" y="1.6" width="2.5" height="3" fill="#fff" opacity=".25"/></svg>
<div class="t" style="left:38.5px;top:378.48px;transform:scaleX(0.925);transform-origin:0 0;color:#222;font-size:6.7px;-webkit-text-stroke:0.08px #222">Souhrnné pohledy</div>
<div class="ab" style="left:25.5px;top:390.35px;width:3px;height:0.7px;background:#c8c8c8"></div>
<svg class="ab" style="left:21px;top:388.15000000000003px" width="5" height="5" viewBox="0 0 5 5"><rect x="0.35" y="0.35" width="4.3" height="4.3" fill="#fbfbfb" stroke="#b4b4b4" stroke-width="0.7"/><path d="M1.3 2.5 H3.7 M2.5 1.3 V3.7" stroke="#3a4a6a" stroke-width="0.6"/></svg>
<svg class="ab" style="left:28px;top:387.55px" width="8" height="6.2" viewBox="0 0 8 6.2"><defs><linearGradient id="fg" x1="0" y1="0" x2="1" y2="1"><stop offset="0" stop-color="#b8e2f4"/><stop offset=".6" stop-color="#5fb2da"/><stop offset="1" stop-color="#2b7fb0"/></linearGradient></defs><path d="M0 0 H3.6 L4.3 0.9 H7.8 V6.2 H0Z" fill="url(#fg)"/><rect x="0" y="5.3" width="7.8" height="0.9" fill="#2a6f98" opacity=".7"/><rect x="0.6" y="1.6" width="2.5" height="3" fill="#fff" opacity=".25"/></svg>
<div class="t" style="left:38.5px;top:387.05px;transform:scaleX(0.925);transform-origin:0 0;color:#222;font-size:6.7px;-webkit-text-stroke:0.08px #222">Manažerské přehledy (BI)</div>
<div class="ab" style="left:25.5px;top:398.92px;width:3px;height:0.7px;background:#c8c8c8"></div>
<svg class="ab" style="left:21px;top:396.72px" width="5" height="5" viewBox="0 0 5 5"><rect x="0.35" y="0.35" width="4.3" height="4.3" fill="#fbfbfb" stroke="#b4b4b4" stroke-width="0.7"/><path d="M1.3 2.5 H3.7 M2.5 1.3 V3.7" stroke="#3a4a6a" stroke-width="0.6"/></svg>
<svg class="ab" style="left:28px;top:396.12px" width="8" height="6.2" viewBox="0 0 8 6.2"><defs><linearGradient id="fg" x1="0" y1="0" x2="1" y2="1"><stop offset="0" stop-color="#b8e2f4"/><stop offset=".6" stop-color="#5fb2da"/><stop offset="1" stop-color="#2b7fb0"/></linearGradient></defs><path d="M0 0 H3.6 L4.3 0.9 H7.8 V6.2 H0Z" fill="url(#fg)"/><rect x="0" y="5.3" width="7.8" height="0.9" fill="#2a6f98" opacity=".7"/><rect x="0.6" y="1.6" width="2.5" height="3" fill="#fff" opacity=".25"/></svg>
<div class="t" style="left:38.5px;top:395.62px;transform:scaleX(0.925);transform-origin:0 0;color:#222;font-size:6.7px;-webkit-text-stroke:0.08px #222">Správa nemovitostí</div>
<div class="ab" style="left:25.5px;top:407.49px;width:3px;height:0.7px;background:#c8c8c8"></div>
<svg class="ab" style="left:21px;top:405.29px" width="5" height="5" viewBox="0 0 5 5"><rect x="0.35" y="0.35" width="4.3" height="4.3" fill="#fbfbfb" stroke="#b4b4b4" stroke-width="0.7"/><path d="M1.3 2.5 H3.7 M2.5 1.3 V3.7" stroke="#3a4a6a" stroke-width="0.6"/></svg>
<svg class="ab" style="left:28px;top:404.69px" width="8" height="6.2" viewBox="0 0 8 6.2"><defs><linearGradient id="fg" x1="0" y1="0" x2="1" y2="1"><stop offset="0" stop-color="#b8e2f4"/><stop offset=".6" stop-color="#5fb2da"/><stop offset="1" stop-color="#2b7fb0"/></linearGradient></defs><path d="M0 0 H3.6 L4.3 0.9 H7.8 V6.2 H0Z" fill="url(#fg)"/><rect x="0" y="5.3" width="7.8" height="0.9" fill="#2a6f98" opacity=".7"/><rect x="0.6" y="1.6" width="2.5" height="3" fill="#fff" opacity=".25"/></svg>
<div class="t" style="left:38.5px;top:404.19px;transform:scaleX(0.925);transform-origin:0 0;color:#222;font-size:6.7px;-webkit-text-stroke:0.08px #222">Správa nemovitostí (nové)</div>
<div class="ab" style="left:25.5px;top:416.06px;width:3px;height:0.7px;background:#c8c8c8"></div>
<svg class="ab" style="left:21px;top:413.86px" width="5" height="5" viewBox="0 0 5 5"><rect x="0.35" y="0.35" width="4.3" height="4.3" fill="#fbfbfb" stroke="#b4b4b4" stroke-width="0.7"/><path d="M1.3 2.5 H3.7 M2.5 1.3 V3.7" stroke="#3a4a6a" stroke-width="0.6"/></svg>
<svg class="ab" style="left:28px;top:413.26px" width="8" height="6.2" viewBox="0 0 8 6.2"><defs><linearGradient id="fg" x1="0" y1="0" x2="1" y2="1"><stop offset="0" stop-color="#b8e2f4"/><stop offset=".6" stop-color="#5fb2da"/><stop offset="1" stop-color="#2b7fb0"/></linearGradient></defs><path d="M0 0 H3.6 L4.3 0.9 H7.8 V6.2 H0Z" fill="url(#fg)"/><rect x="0" y="5.3" width="7.8" height="0.9" fill="#2a6f98" opacity=".7"/><rect x="0.6" y="1.6" width="2.5" height="3" fill="#fff" opacity=".25"/></svg>
<div class="t" style="left:38.5px;top:412.76px;transform:scaleX(0.925);transform-origin:0 0;color:#222;font-size:6.7px;-webkit-text-stroke:0.08px #222">Vodárenství</div>
<div class="ab" style="left:25.5px;top:424.63px;width:3px;height:0.7px;background:#c8c8c8"></div>
<svg class="ab" style="left:21px;top:422.43px" width="5" height="5" viewBox="0 0 5 5"><rect x="0.35" y="0.35" width="4.3" height="4.3" fill="#fbfbfb" stroke="#b4b4b4" stroke-width="0.7"/><path d="M1.3 2.5 H3.7 M2.5 1.3 V3.7" stroke="#3a4a6a" stroke-width="0.6"/></svg>
<svg class="ab" style="left:28px;top:421.83px" width="8" height="6.2" viewBox="0 0 8 6.2"><defs><linearGradient id="fg" x1="0" y1="0" x2="1" y2="1"><stop offset="0" stop-color="#b8e2f4"/><stop offset=".6" stop-color="#5fb2da"/><stop offset="1" stop-color="#2b7fb0"/></linearGradient></defs><path d="M0 0 H3.6 L4.3 0.9 H7.8 V6.2 H0Z" fill="url(#fg)"/><rect x="0" y="5.3" width="7.8" height="0.9" fill="#2a6f98" opacity=".7"/><rect x="0.6" y="1.6" width="2.5" height="3" fill="#fff" opacity=".25"/></svg>
<div class="t" style="left:38.5px;top:421.33px;transform:scaleX(0.925);transform-origin:0 0;color:#222;font-size:6.7px;-webkit-text-stroke:0.08px #222">Zvířata</div>
<div class="ab" style="left:25.5px;top:433.2px;width:3px;height:0.7px;background:#c8c8c8"></div>
<svg class="ab" style="left:21px;top:431.0px" width="5" height="5" viewBox="0 0 5 5"><rect x="0.35" y="0.35" width="4.3" height="4.3" fill="#fbfbfb" stroke="#b4b4b4" stroke-width="0.7"/><path d="M1.3 2.5 H3.7 M2.5 1.3 V3.7" stroke="#3a4a6a" stroke-width="0.6"/></svg>
<svg class="ab" style="left:28px;top:430.4px" width="8" height="6.2" viewBox="0 0 8 6.2"><defs><linearGradient id="fg" x1="0" y1="0" x2="1" y2="1"><stop offset="0" stop-color="#b8e2f4"/><stop offset=".6" stop-color="#5fb2da"/><stop offset="1" stop-color="#2b7fb0"/></linearGradient></defs><path d="M0 0 H3.6 L4.3 0.9 H7.8 V6.2 H0Z" fill="url(#fg)"/><rect x="0" y="5.3" width="7.8" height="0.9" fill="#2a6f98" opacity=".7"/><rect x="0.6" y="1.6" width="2.5" height="3" fill="#fff" opacity=".25"/></svg>
<div class="t" style="left:38.5px;top:429.9px;transform:scaleX(0.925);transform-origin:0 0;color:#222;font-size:6.7px;-webkit-text-stroke:0.08px #222">QI Portály</div>
<div class="ab" style="left:25.5px;top:441.77px;width:3px;height:0.7px;background:#c8c8c8"></div>
<svg class="ab" style="left:21px;top:439.57px" width="5" height="5" viewBox="0 0 5 5"><rect x="0.35" y="0.35" width="4.3" height="4.3" fill="#fbfbfb" stroke="#b4b4b4" stroke-width="0.7"/><path d="M1.3 2.5 H3.7 M2.5 1.3 V3.7" stroke="#3a4a6a" stroke-width="0.6"/></svg>
<svg class="ab" style="left:28px;top:438.96999999999997px" width="8" height="6.2" viewBox="0 0 8 6.2"><defs><linearGradient id="fg" x1="0" y1="0" x2="1" y2="1"><stop offset="0" stop-color="#b8e2f4"/><stop offset=".6" stop-color="#5fb2da"/><stop offset="1" stop-color="#2b7fb0"/></linearGradient></defs><path d="M0 0 H3.6 L4.3 0.9 H7.8 V6.2 H0Z" fill="url(#fg)"/><rect x="0" y="5.3" width="7.8" height="0.9" fill="#2a6f98" opacity=".7"/><rect x="0.6" y="1.6" width="2.5" height="3" fill="#fff" opacity=".25"/></svg>
<div class="t" style="left:38.5px;top:438.46999999999997px;transform:scaleX(0.925);transform-origin:0 0;color:#222;font-size:6.7px;-webkit-text-stroke:0.08px #222">QI Mobil</div>
</div>
<div class="ab" style="left:0px;top:497.8px;width:800px;height:2.2px;background:#1b1b1b"></div>
<div class="ab" style="left:292.5px;top:499px;width:76px;height:1px;background:#5a5a5a"></div>
<div class="ab" style="left:210px;top:34px;width:428px;height:366px;background:#fff;border-left:1.2px solid #5b8bc6"></div>
<div class="ab" style="left:211px;top:34px;width:427px;height:13.5px;background:#e8e8e8"></div>
<svg class="ab" style="left:213.5px;top:37.5px" width="8" height="8" viewBox="0 0 8 8"><path d="M1 7 L2 4.5 L6 0.8 L7.2 2 L3.4 5.8Z" fill="#fafafa" stroke="#bbb" stroke-width=".5"/><path d="M0.5 7.5 H3" stroke="#999" stroke-width=".6"/></svg>
<div class="t" style="left:223px;top:37px;transform:scaleX(0.88);transform-origin:0 0;color:#333;font-weight:bold;font-size:6.2px">Obchodní případy</div>
<div class="t" style="left:591.8px;top:36.8px;transform:scaleX(0.9);transform-origin:0 0;color:#333;font-size:6.4px;-webkit-text-stroke:0.1px #333">17</div>
<div class="ab" style="left:604px;top:41px;width:6px;height:0.8px;background:#444"></div>
<div class="ab" style="left:616.5px;top:38.2px;width:5.5px;height:5.5px;border:0.7px solid #333"></div>
<svg class="ab" style="left:628px;top:38px" width="6" height="6" viewBox="0 0 6 6"><path d="M0.6 0.6 L5.4 5.4 M5.4 0.6 L0.6 5.4" stroke="#222" stroke-width="0.9"/></svg>
<div class="ab" style="left:217px;top:61px;width:349px;height:333.5px;background:#f8fbfe;border:1px solid #e1e9f3"></div>
<div class="ab" style="left:217px;top:51.5px;width:24.5px;height:10px;background:#f8fbfe;border:1px solid #dbe5f1;border-bottom:none"></div>
<div class="t" style="left:220px;top:52px;transform:scaleX(0.8);transform-origin:0 0;color:#444;font-size:6.4px">Seznam</div>
<div class="t" style="left:244px;top:52.2px;transform:scaleX(0.8);transform-origin:0 0;color:#334;font-size:6.4px">Detail</div>
<div class="t" style="left:263.5px;top:52.2px;transform:scaleX(0.8);transform-origin:0 0;color:#334;font-size:6.4px">Obchodní partner</div>
<div class="t" style="left:309px;top:52.2px;transform:scaleX(0.8);transform-origin:0 0;color:#334;font-size:6.4px">Druh zakázky</div>
<div class="ab" style="left:223px;top:67.3px;width:328.5px;height:17.2px;background:#fafcfe;border-top:1px solid #e3ebf4"></div>
<div class="t" style="left:224.5px;top:69.0px;transform:scaleX(0.77);transform-origin:0 0;color:#3a3a44;font-size:6.3px;line-height:6.4px;-webkit-text-stroke:0.05px #333;width:51.0px;overflow:hidden">Kód obchodního<br>případu</div>
<div class="t" style="left:265.8px;top:69.0px;transform:scaleX(0.77);transform-origin:0 0;color:#3a3a44;font-size:6.3px;line-height:6.4px;-webkit-text-stroke:0.05px #333;width:124.9px;overflow:hidden">Název obchodního případu</div>
<div class="t" style="left:364.0px;top:69.0px;transform:scaleX(0.77);transform-origin:0 0;color:#3a3a44;font-size:6.3px;line-height:6.4px;-webkit-text-stroke:0.05px #333;width:53.9px;overflow:hidden">Fáze obchodního<br>případu</div>
<div class="t" style="left:407.5px;top:69.0px;transform:scaleX(0.77);transform-origin:0 0;color:#3a3a44;font-size:6.3px;line-height:6.4px;-webkit-text-stroke:0.05px #333;width:67.5px;overflow:hidden">Datum zaevidování</div>
<div class="t" style="left:461.5px;top:69.0px;transform:scaleX(0.77);transform-origin:0 0;color:#3a3a44;font-size:6.3px;line-height:6.4px;-webkit-text-stroke:0.05px #333;width:41.6px;overflow:hidden">Druh<br>kontaktu</div>
<div class="t" style="left:495.5px;top:69.0px;transform:scaleX(0.77);transform-origin:0 0;color:#3a3a44;font-size:6.3px;line-height:6.4px;-webkit-text-stroke:0.05px #333;width:50.6px;overflow:hidden">Kód obchodního<br>partnera</div>
<div class="t" style="left:536.5px;top:69.0px;transform:scaleX(0.77);transform-origin:0 0;color:#3a3a44;font-size:6.3px;line-height:6.4px;-webkit-text-stroke:0.05px #333;width:18.8px;overflow:hidden">IČO</div>
<div class="ab" style="left:264.3px;top:67.3px;width:0.8px;height:17.2px;background:#e4ecf5"></div>
<div class="ab" style="left:362.5px;top:67.3px;width:0.8px;height:17.2px;background:#e4ecf5"></div>
<div class="ab" style="left:406px;top:67.3px;width:0.8px;height:17.2px;background:#e4ecf5"></div>
<div class="ab" style="left:460px;top:67.3px;width:0.8px;height:17.2px;background:#e4ecf5"></div>
<div class="ab" style="left:494px;top:67.3px;width:0.8px;height:17.2px;background:#e4ecf5"></div>
<div class="ab" style="left:535px;top:67.3px;width:0.8px;height:17.2px;background:#e4ecf5"></div>
<div class="ab" style="left:223px;top:84.5px;width:328.5px;height:8.56px;background:#0c4a70"></div>
<div class="t" style="left:224.2px;top:85.7px;transform:scaleX(0.75);transform-origin:0 0;color:#fff;font-size:6.4px;-webkit-text-stroke:0.02px #fff;width:53.1px;overflow:hidden">OP-CZ-CKOLO</div>
<div class="t" style="left:265.5px;top:85.7px;transform:scaleX(0.8);transform-origin:0 0;color:#fff;font-size:6.4px;-webkit-text-stroke:0.02px #fff;width:120.9px;overflow:hidden">OP České kolo - Velko</div>
<div class="t" style="left:363.7px;top:85.7px;transform:scaleX(0.8);transform-origin:0 0;color:#fff;font-size:6.4px;-webkit-text-stroke:0.02px #fff;width:52.5px;overflow:hidden">Diagnóza potřeby</div>
<div class="t" style="left:407.2px;top:85.7px;transform:scaleX(0.86);transform-origin:0 0;color:#fff;font-size:6.4px;-webkit-text-stroke:0.02px #fff;width:61.0px;overflow:hidden">05.12.2007 14:44:58</div>
<div class="t" style="left:461.2px;top:85.7px;transform:scaleX(0.8);transform-origin:0 0;color:#fff;font-size:6.4px;-webkit-text-stroke:0.02px #fff;width:40.6px;overflow:hidden">Aktivní prodej</div>
<div class="t" style="left:495.2px;top:85.7px;transform:scaleX(0.75);transform-origin:0 0;color:#fff;font-size:6.4px;-webkit-text-stroke:0.02px #fff;width:52.7px;overflow:hidden">CESKOLSIDLO</div>
<div class="t" style="left:536.2px;top:85.7px;transform:scaleX(0.8);transform-origin:0 0;color:#fff;font-size:6.4px;-webkit-text-stroke:0.02px #fff;width:18.8px;overflow:hidden">98756</div>
<div class="ab" style="left:223px;top:93.06px;width:328.5px;height:8.56px;background:#f3f7fb"></div>
<div class="ab" style="left:264.3px;top:93.06px;width:142px;height:8.56px;background:#b4f289"></div>
<div class="t" style="left:224.2px;top:94.26px;transform:scaleX(0.75);transform-origin:0 0;color:#2a2a35;font-size:6.4px;-webkit-text-stroke:0.02px #2a2a35;width:53.1px;overflow:hidden">OP-CZ-VELBIKE</div>
<div class="t" style="left:265.5px;top:94.26px;transform:scaleX(0.8);transform-origin:0 0;color:#2a2a35;font-size:6.4px;-webkit-text-stroke:0.02px #2a2a35;width:120.9px;overflow:hidden">OP Velkoobchod Bikezone - Velko</div>
<div class="t" style="left:363.7px;top:94.26px;transform:scaleX(0.8);transform-origin:0 0;color:#2a2a35;font-size:6.4px;-webkit-text-stroke:0.02px #2a2a35;width:52.5px;overflow:hidden">Realizace</div>
<div class="t" style="left:407.2px;top:94.26px;transform:scaleX(0.86);transform-origin:0 0;color:#2a2a35;font-size:6.4px;-webkit-text-stroke:0.02px #2a2a35;width:61.0px;overflow:hidden">05.12.2007 14:44:58</div>
<div class="t" style="left:461.2px;top:94.26px;transform:scaleX(0.8);transform-origin:0 0;color:#2a2a35;font-size:6.4px;-webkit-text-stroke:0.02px #2a2a35;width:40.6px;overflow:hidden">Výstava</div>
<div class="t" style="left:495.2px;top:94.26px;transform:scaleX(0.75);transform-origin:0 0;color:#2a2a35;font-size:6.4px;-webkit-text-stroke:0.02px #2a2a35;width:52.7px;overflow:hidden">VELBIKE</div>
<div class="t" style="left:536.2px;top:94.26px;transform:scaleX(0.8);transform-origin:0 0;color:#2a2a35;font-size:6.4px;-webkit-text-stroke:0.02px #2a2a35;width:18.8px;overflow:hidden">64634</div>
<div class="ab" style="left:223px;top:101.62px;width:328.5px;height:8.56px;background:#fff"></div>
<div class="ab" style="left:264.3px;top:101.62px;width:142px;height:8.56px;background:#d8fac0"></div>
<div class="t" style="left:224.2px;top:102.82000000000001px;transform:scaleX(0.75);transform-origin:0 0;color:#2a2a35;font-size:6.4px;-webkit-text-stroke:0.02px #2a2a35;width:53.1px;overflow:hidden">OP-GE-GESIPA</div>
<div class="t" style="left:265.5px;top:102.82000000000001px;transform:scaleX(0.8);transform-origin:0 0;color:#2a2a35;font-size:6.4px;-webkit-text-stroke:0.02px #2a2a35;width:120.9px;overflow:hidden">OP Gesipa Vorstellung - Velko</div>
<div class="t" style="left:363.7px;top:102.82000000000001px;transform:scaleX(0.8);transform-origin:0 0;color:#2a2a35;font-size:6.4px;-webkit-text-stroke:0.02px #2a2a35;width:52.5px;overflow:hidden">Realizace</div>
<div class="t" style="left:407.2px;top:102.82000000000001px;transform:scaleX(0.86);transform-origin:0 0;color:#2a2a35;font-size:6.4px;-webkit-text-stroke:0.02px #2a2a35;width:61.0px;overflow:hidden">05.12.2007 14:44:58</div>
<div class="t" style="left:461.2px;top:102.82000000000001px;transform:scaleX(0.8);transform-origin:0 0;color:#2a2a35;font-size:6.4px;-webkit-text-stroke:0.02px #2a2a35;width:40.6px;overflow:hidden">Poptávka</div>
<div class="t" style="left:495.2px;top:102.82000000000001px;transform:scaleX(0.75);transform-origin:0 0;color:#2a2a35;font-size:6.4px;-webkit-text-stroke:0.02px #2a2a35;width:52.7px;overflow:hidden">GESIPA</div>
<div class="t" style="left:536.2px;top:102.82000000000001px;transform:scaleX(0.8);transform-origin:0 0;color:#2a2a35;font-size:6.4px;-webkit-text-stroke:0.02px #2a2a35;width:18.8px;overflow:hidden">81114</div>
<div class="ab" style="left:223px;top:110.18px;width:328.5px;height:8.56px;background:#f3f7fb"></div>
<div class="ab" style="left:264.3px;top:110.18px;width:142px;height:8.56px;background:#b4f289"></div>
<div class="t" style="left:224.2px;top:111.38000000000001px;transform:scaleX(0.75);transform-origin:0 0;color:#2a2a35;font-size:6.4px;-webkit-text-stroke:0.02px #2a2a35;width:53.1px;overflow:hidden">OP-SK-DEWAL</div>
<div class="t" style="left:265.5px;top:111.38000000000001px;transform:scaleX(0.8);transform-origin:0 0;color:#2a2a35;font-size:6.4px;-webkit-text-stroke:0.02px #2a2a35;width:120.9px;overflow:hidden">OP DEWAL Slovakia - Velko</div>
<div class="t" style="left:363.7px;top:111.38000000000001px;transform:scaleX(0.8);transform-origin:0 0;color:#2a2a35;font-size:6.4px;-webkit-text-stroke:0.02px #2a2a35;width:52.5px;overflow:hidden">Kontakt</div>
<div class="t" style="left:407.2px;top:111.38000000000001px;transform:scaleX(0.86);transform-origin:0 0;color:#2a2a35;font-size:6.4px;-webkit-text-stroke:0.02px #2a2a35;width:61.0px;overflow:hidden">05.12.2007 14:44:58</div>
<div class="t" style="left:461.2px;top:111.38000000000001px;transform:scaleX(0.8);transform-origin:0 0;color:#2a2a35;font-size:6.4px;-webkit-text-stroke:0.02px #2a2a35;width:40.6px;overflow:hidden">Doporučení</div>
<div class="t" style="left:495.2px;top:111.38000000000001px;transform:scaleX(0.75);transform-origin:0 0;color:#2a2a35;font-size:6.4px;-webkit-text-stroke:0.02px #2a2a35;width:52.7px;overflow:hidden">DEWALSIDLO</div>
<div class="t" style="left:536.2px;top:111.38000000000001px;transform:scaleX(0.8);transform-origin:0 0;color:#2a2a35;font-size:6.4px;-webkit-text-stroke:0.02px #2a2a35;width:18.8px;overflow:hidden">08678</div>
<div class="ab" style="left:223px;top:118.74000000000001px;width:328.5px;height:8.56px;background:#fff"></div>
<div class="ab" style="left:264.3px;top:118.74000000000001px;width:142px;height:8.56px;background:#d8fac0"></div>
<div class="t" style="left:224.2px;top:119.94000000000001px;transform:scaleX(0.75);transform-origin:0 0;color:#2a2a35;font-size:6.4px;-webkit-text-stroke:0.02px #2a2a35;width:53.1px;overflow:hidden">OP-CZ-VELOM</div>
<div class="t" style="left:265.5px;top:119.94000000000001px;transform:scaleX(0.8);transform-origin:0 0;color:#2a2a35;font-size:6.4px;-webkit-text-stroke:0.02px #2a2a35;width:120.9px;overflow:hidden">OP Velom - Malo, Dodavatel</div>
<div class="t" style="left:363.7px;top:119.94000000000001px;transform:scaleX(0.8);transform-origin:0 0;color:#2a2a35;font-size:6.4px;-webkit-text-stroke:0.02px #2a2a35;width:52.5px;overflow:hidden">Kontakt</div>
<div class="t" style="left:407.2px;top:119.94000000000001px;transform:scaleX(0.86);transform-origin:0 0;color:#2a2a35;font-size:6.4px;-webkit-text-stroke:0.02px #2a2a35;width:61.0px;overflow:hidden">05.12.2007 14:44:58</div>
<div class="t" style="left:461.2px;top:119.94000000000001px;transform:scaleX(0.8);transform-origin:0 0;color:#2a2a35;font-size:6.4px;-webkit-text-stroke:0.02px #2a2a35;width:40.6px;overflow:hidden">Aktivní prodej</div>
<div class="t" style="left:495.2px;top:119.94000000000001px;transform:scaleX(0.75);transform-origin:0 0;color:#2a2a35;font-size:6.4px;-webkit-text-stroke:0.02px #2a2a35;width:52.7px;overflow:hidden">D-VELOM</div>
<div class="t" style="left:536.2px;top:119.94000000000001px;transform:scaleX(0.8);transform-origin:0 0;color:#2a2a35;font-size:6.4px;-webkit-text-stroke:0.02px #2a2a35;width:18.8px;overflow:hidden">75454</div>
<div class="ab" style="left:223px;top:127.30000000000001px;width:328.5px;height:8.56px;background:#f3f7fb"></div>
<div class="ab" style="left:264.3px;top:127.30000000000001px;width:142px;height:8.56px;background:#b4f289"></div>
<div class="t" style="left:224.2px;top:128.5px;transform:scaleX(0.75);transform-origin:0 0;color:#2a2a35;font-size:6.4px;-webkit-text-stroke:0.02px #2a2a35;width:53.1px;overflow:hidden">OP-CZ-TESKOL</div>
<div class="t" style="left:265.5px;top:128.5px;transform:scaleX(0.8);transform-origin:0 0;color:#2a2a35;font-size:6.4px;-webkit-text-stroke:0.02px #2a2a35;width:120.9px;overflow:hidden">OP TESKOL - Malo</div>
<div class="t" style="left:363.7px;top:128.5px;transform:scaleX(0.8);transform-origin:0 0;color:#2a2a35;font-size:6.4px;-webkit-text-stroke:0.02px #2a2a35;width:52.5px;overflow:hidden">Kontakt</div>
<div class="t" style="left:407.2px;top:128.5px;transform:scaleX(0.86);transform-origin:0 0;color:#2a2a35;font-size:6.4px;-webkit-text-stroke:0.02px #2a2a35;width:61.0px;overflow:hidden">05.12.2007 14:44:58</div>
<div class="t" style="left:461.2px;top:128.5px;transform:scaleX(0.8);transform-origin:0 0;color:#2a2a35;font-size:6.4px;-webkit-text-stroke:0.02px #2a2a35;width:40.6px;overflow:hidden">Výstava</div>
<div class="t" style="left:495.2px;top:128.5px;transform:scaleX(0.75);transform-origin:0 0;color:#2a2a35;font-size:6.4px;-webkit-text-stroke:0.02px #2a2a35;width:52.7px;overflow:hidden">TESKOL</div>
<div class="t" style="left:536.2px;top:128.5px;transform:scaleX(0.8);transform-origin:0 0;color:#2a2a35;font-size:6.4px;-webkit-text-stroke:0.02px #2a2a35;width:18.8px;overflow:hidden">91230</div>
<div class="ab" style="left:223px;top:135.86px;width:328.5px;height:8.56px;background:#fff"></div>
<div class="ab" style="left:264.3px;top:135.86px;width:142px;height:8.56px;background:#d8fac0"></div>
<div class="t" style="left:224.2px;top:137.06px;transform:scaleX(0.75);transform-origin:0 0;color:#2a2a35;font-size:6.4px;-webkit-text-stroke:0.02px #2a2a35;width:53.1px;overflow:hidden">OP-CZ-RFW</div>
<div class="t" style="left:265.5px;top:137.06px;transform:scaleX(0.8);transform-origin:0 0;color:#2a2a35;font-size:6.4px;-webkit-text-stroke:0.02px #2a2a35;width:120.9px;overflow:hidden">OP RFW - Malo</div>
<div class="t" style="left:363.7px;top:137.06px;transform:scaleX(0.8);transform-origin:0 0;color:#2a2a35;font-size:6.4px;-webkit-text-stroke:0.02px #2a2a35;width:52.5px;overflow:hidden">Kontakt</div>
<div class="t" style="left:407.2px;top:137.06px;transform:scaleX(0.86);transform-origin:0 0;color:#2a2a35;font-size:6.4px;-webkit-text-stroke:0.02px #2a2a35;width:61.0px;overflow:hidden">05.12.2007 14:44:58</div>
<div class="t" style="left:461.2px;top:137.06px;transform:scaleX(0.8);transform-origin:0 0;color:#2a2a35;font-size:6.4px;-webkit-text-stroke:0.02px #2a2a35;width:40.6px;overflow:hidden">Aktivní prodej</div>
<div class="t" style="left:495.2px;top:137.06px;transform:scaleX(0.75);transform-origin:0 0;color:#2a2a35;font-size:6.4px;-webkit-text-stroke:0.02px #2a2a35;width:52.7px;overflow:hidden">O-RFW</div>
<div class="t" style="left:536.2px;top:137.06px;transform:scaleX(0.8);transform-origin:0 0;color:#2a2a35;font-size:6.4px;-webkit-text-stroke:0.02px #2a2a35;width:18.8px;overflow:hidden">24356</div>
<div class="ab" style="left:223px;top:144.42000000000002px;width:328.5px;height:8.56px;background:#f3f7fb"></div>
<div class="ab" style="left:264.3px;top:144.42000000000002px;width:142px;height:8.56px;background:#b4f289"></div>
<div class="t" style="left:224.2px;top:145.62px;transform:scaleX(0.75);transform-origin:0 0;color:#2a2a35;font-size:6.4px;-webkit-text-stroke:0.02px #2a2a35;width:53.1px;overflow:hidden">OP-CZ-EKOTOOL</div>
<div class="t" style="left:265.5px;top:145.62px;transform:scaleX(0.8);transform-origin:0 0;color:#2a2a35;font-size:6.4px;-webkit-text-stroke:0.02px #2a2a35;width:120.9px;overflow:hidden">OP EKOTOOL - Malo</div>
<div class="t" style="left:363.7px;top:145.62px;transform:scaleX(0.8);transform-origin:0 0;color:#2a2a35;font-size:6.4px;-webkit-text-stroke:0.02px #2a2a35;width:52.5px;overflow:hidden">Realizace</div>
<div class="t" style="left:407.2px;top:145.62px;transform:scaleX(0.86);transform-origin:0 0;color:#2a2a35;font-size:6.4px;-webkit-text-stroke:0.02px #2a2a35;width:61.0px;overflow:hidden">12.04.2018 14:05:57</div>
<div class="t" style="left:461.2px;top:145.62px;transform:scaleX(0.8);transform-origin:0 0;color:#2a2a35;font-size:6.4px;-webkit-text-stroke:0.02px #2a2a35;width:40.6px;overflow:hidden">Aktivní prodej</div>
<div class="t" style="left:495.2px;top:145.62px;transform:scaleX(0.75);transform-origin:0 0;color:#2a2a35;font-size:6.4px;-webkit-text-stroke:0.02px #2a2a35;width:52.7px;overflow:hidden">EKOTOOL</div>
<div class="t" style="left:536.2px;top:145.62px;transform:scaleX(0.8);transform-origin:0 0;color:#2a2a35;font-size:6.4px;-webkit-text-stroke:0.02px #2a2a35;width:18.8px;overflow:hidden">07678</div>
<div class="ab" style="left:223px;top:152.98000000000002px;width:328.5px;height:8.56px;background:#fff"></div>
<div class="ab" style="left:264.3px;top:152.98000000000002px;width:142px;height:8.56px;background:#d8fac0"></div>
<div class="t" style="left:224.2px;top:154.18px;transform:scaleX(0.75);transform-origin:0 0;color:#2a2a35;font-size:6.4px;-webkit-text-stroke:0.02px #2a2a35;width:53.1px;overflow:hidden">OP-CZ-CYKLOD</div>
<div class="t" style="left:265.5px;top:154.18px;transform:scaleX(0.8);transform-origin:0 0;color:#2a2a35;font-size:6.4px;-webkit-text-stroke:0.02px #2a2a35;width:120.9px;overflow:hidden">OP Cyklo doplňky - Malo</div>
<div class="t" style="left:363.7px;top:154.18px;transform:scaleX(0.8);transform-origin:0 0;color:#2a2a35;font-size:6.4px;-webkit-text-stroke:0.02px #2a2a35;width:52.5px;overflow:hidden">Realizace</div>
<div class="t" style="left:407.2px;top:154.18px;transform:scaleX(0.86);transform-origin:0 0;color:#2a2a35;font-size:6.4px;-webkit-text-stroke:0.02px #2a2a35;width:61.0px;overflow:hidden">05.12.2007 14:44:58</div>
<div class="t" style="left:461.2px;top:154.18px;transform:scaleX(0.8);transform-origin:0 0;color:#2a2a35;font-size:6.4px;-webkit-text-stroke:0.02px #2a2a35;width:40.6px;overflow:hidden">www stránky</div>
<div class="t" style="left:495.2px;top:154.18px;transform:scaleX(0.75);transform-origin:0 0;color:#2a2a35;font-size:6.4px;-webkit-text-stroke:0.02px #2a2a35;width:52.7px;overflow:hidden">D-CYKLO-C</div>
<div class="t" style="left:536.2px;top:154.18px;transform:scaleX(0.8);transform-origin:0 0;color:#2a2a35;font-size:6.4px;-webkit-text-stroke:0.02px #2a2a35;width:18.8px;overflow:hidden">09845</div>
<div class="ab" style="left:223px;top:161.54000000000002px;width:328.5px;height:8.56px;background:#f3f7fb"></div>
<div class="ab" style="left:264.3px;top:161.54000000000002px;width:142px;height:8.56px;background:#b4f289"></div>
<div class="t" style="left:224.2px;top:162.74px;transform:scaleX(0.75);transform-origin:0 0;color:#2a2a35;font-size:6.4px;-webkit-text-stroke:0.02px #2a2a35;width:53.1px;overflow:hidden">OP-CZ-BARLAK</div>
<div class="t" style="left:265.5px;top:162.74px;transform:scaleX(0.8);transform-origin:0 0;color:#2a2a35;font-size:6.4px;-webkit-text-stroke:0.02px #2a2a35;width:120.9px;overflow:hidden">OP Barvy-Laky - Dodavatel</div>
<div class="t" style="left:363.7px;top:162.74px;transform:scaleX(0.8);transform-origin:0 0;color:#2a2a35;font-size:6.4px;-webkit-text-stroke:0.02px #2a2a35;width:52.5px;overflow:hidden">Zrušeno</div>
<div class="t" style="left:407.2px;top:162.74px;transform:scaleX(0.86);transform-origin:0 0;color:#2a2a35;font-size:6.4px;-webkit-text-stroke:0.02px #2a2a35;width:61.0px;overflow:hidden">01.01.2010 12:23:49</div>
<div class="t" style="left:495.2px;top:162.74px;transform:scaleX(0.75);transform-origin:0 0;color:#2a2a35;font-size:6.4px;-webkit-text-stroke:0.02px #2a2a35;width:52.7px;overflow:hidden">BARLAK</div>
<div class="t" style="left:536.2px;top:162.74px;transform:scaleX(0.8);transform-origin:0 0;color:#2a2a35;font-size:6.4px;-webkit-text-stroke:0.02px #2a2a35;width:18.8px;overflow:hidden">00876</div>
<div class="ab" style="left:223px;top:170.10000000000002px;width:328.5px;height:8.56px;background:#fff"></div>
<div class="ab" style="left:264.3px;top:170.10000000000002px;width:142px;height:8.56px;background:#d8fac0"></div>
<div class="t" style="left:224.2px;top:171.3px;transform:scaleX(0.75);transform-origin:0 0;color:#2a2a35;font-size:6.4px;-webkit-text-stroke:0.02px #2a2a35;width:53.1px;overflow:hidden">OP-CZ-PAPYR</div>
<div class="t" style="left:265.5px;top:171.3px;transform:scaleX(0.8);transform-origin:0 0;color:#2a2a35;font-size:6.4px;-webkit-text-stroke:0.02px #2a2a35;width:120.9px;overflow:hidden">OP Papyrus - Dodavatel</div>
<div class="t" style="left:363.7px;top:171.3px;transform:scaleX(0.8);transform-origin:0 0;color:#2a2a35;font-size:6.4px;-webkit-text-stroke:0.02px #2a2a35;width:52.5px;overflow:hidden">Zrušeno</div>
<div class="t" style="left:407.2px;top:171.3px;transform:scaleX(0.86);transform-origin:0 0;color:#2a2a35;font-size:6.4px;-webkit-text-stroke:0.02px #2a2a35;width:61.0px;overflow:hidden">01.01.2010 12:26:18</div>
<div class="t" style="left:495.2px;top:171.3px;transform:scaleX(0.75);transform-origin:0 0;color:#2a2a35;font-size:6.4px;-webkit-text-stroke:0.02px #2a2a35;width:52.7px;overflow:hidden">PAPYR</div>
<div class="t" style="left:536.2px;top:171.3px;transform:scaleX(0.8);transform-origin:0 0;color:#2a2a35;font-size:6.4px;-webkit-text-stroke:0.02px #2a2a35;width:18.8px;overflow:hidden">33550</div>
<div class="ab" style="left:223px;top:178.66000000000003px;width:328.5px;height:8.56px;background:#f3f7fb"></div>
<div class="ab" style="left:264.3px;top:178.66000000000003px;width:142px;height:8.56px;background:#b4f289"></div>
<div class="t" style="left:224.2px;top:179.86px;transform:scaleX(0.75);transform-origin:0 0;color:#2a2a35;font-size:6.4px;-webkit-text-stroke:0.02px #2a2a35;width:53.1px;overflow:hidden">OP-CZ-PROOBAL</div>
<div class="t" style="left:265.5px;top:179.86px;transform:scaleX(0.8);transform-origin:0 0;color:#2a2a35;font-size:6.4px;-webkit-text-stroke:0.02px #2a2a35;width:120.9px;overflow:hidden">OP PRO-OBAL - Dodavatel</div>
<div class="t" style="left:363.7px;top:179.86px;transform:scaleX(0.8);transform-origin:0 0;color:#2a2a35;font-size:6.4px;-webkit-text-stroke:0.02px #2a2a35;width:52.5px;overflow:hidden">Zrušeno</div>
<div class="t" style="left:407.2px;top:179.86px;transform:scaleX(0.86);transform-origin:0 0;color:#2a2a35;font-size:6.4px;-webkit-text-stroke:0.02px #2a2a35;width:61.0px;overflow:hidden">01.01.2010 12:27:50</div>
<div class="t" style="left:495.2px;top:179.86px;transform:scaleX(0.75);transform-origin:0 0;color:#2a2a35;font-size:6.4px;-webkit-text-stroke:0.02px #2a2a35;width:52.7px;overflow:hidden">PROOBAL</div>
<div class="t" style="left:536.2px;top:179.86px;transform:scaleX(0.8);transform-origin:0 0;color:#2a2a35;font-size:6.4px;-webkit-text-stroke:0.02px #2a2a35;width:18.8px;overflow:hidden">45124</div>
<div class="ab" style="left:223px;top:187.22px;width:328.5px;height:8.56px;background:#fff"></div>
<div class="ab" style="left:264.3px;top:187.22px;width:142px;height:8.56px;background:#d8fac0"></div>
<div class="t" style="left:224.2px;top:188.42px;transform:scaleX(0.75);transform-origin:0 0;color:#2a2a35;font-size:6.4px;-webkit-text-stroke:0.02px #2a2a35;width:53.1px;overflow:hidden">OP-JP-TOMEN</div>
<div class="t" style="left:265.5px;top:188.42px;transform:scaleX(0.8);transform-origin:0 0;color:#2a2a35;font-size:6.4px;-webkit-text-stroke:0.02px #2a2a35;width:120.9px;overflow:hidden">OP Tomen Industries - Dodavatel</div>
<div class="t" style="left:363.7px;top:188.42px;transform:scaleX(0.8);transform-origin:0 0;color:#2a2a35;font-size:6.4px;-webkit-text-stroke:0.02px #2a2a35;width:52.5px;overflow:hidden">Realizace</div>
<div class="t" style="left:407.2px;top:188.42px;transform:scaleX(0.86);transform-origin:0 0;color:#2a2a35;font-size:6.4px;-webkit-text-stroke:0.02px #2a2a35;width:61.0px;overflow:hidden">01.01.2010 12:29:05</div>
<div class="t" style="left:495.2px;top:188.42px;transform:scaleX(0.75);transform-origin:0 0;color:#2a2a35;font-size:6.4px;-webkit-text-stroke:0.02px #2a2a35;width:52.7px;overflow:hidden">TOMEN</div>
<div class="ab" style="left:223px;top:195.78px;width:328.5px;height:8.56px;background:#f3f7fb"></div>
<div class="ab" style="left:264.3px;top:195.78px;width:142px;height:8.56px;background:#b4f289"></div>
<div class="t" style="left:224.2px;top:196.98px;transform:scaleX(0.75);transform-origin:0 0;color:#2a2a35;font-size:6.4px;-webkit-text-stroke:0.02px #2a2a35;width:53.1px;overflow:hidden">OP-CZ-TECHN</div>
<div class="t" style="left:265.5px;top:196.98px;transform:scaleX(0.8);transform-origin:0 0;color:#2a2a35;font-size:6.4px;-webkit-text-stroke:0.02px #2a2a35;width:120.9px;overflow:hidden">OP TECHNOPLYN - Dodavatel</div>
<div class="t" style="left:363.7px;top:196.98px;transform:scaleX(0.8);transform-origin:0 0;color:#2a2a35;font-size:6.4px;-webkit-text-stroke:0.02px #2a2a35;width:52.5px;overflow:hidden">Realizace</div>
<div class="t" style="left:407.2px;top:196.98px;transform:scaleX(0.86);transform-origin:0 0;color:#2a2a35;font-size:6.4px;-webkit-text-stroke:0.02px #2a2a35;width:61.0px;overflow:hidden">01.01.2010 12:30:08</div>
<div class="t" style="left:495.2px;top:196.98px;transform:scaleX(0.75);transform-origin:0 0;color:#2a2a35;font-size:6.4px;-webkit-text-stroke:0.02px #2a2a35;width:52.7px;overflow:hidden">TECHN</div>
<div class="t" style="left:536.2px;top:196.98px;transform:scaleX(0.8);transform-origin:0 0;color:#2a2a35;font-size:6.4px;-webkit-text-stroke:0.02px #2a2a35;width:18.8px;overflow:hidden">76565</div>
<div class="ab" style="left:223px;top:204.34px;width:328.5px;height:8.56px;background:#fff"></div>
<div class="ab" style="left:264.3px;top:204.34px;width:142px;height:8.56px;background:#d8fac0"></div>
<div class="t" style="left:224.2px;top:205.54px;transform:scaleX(0.75);transform-origin:0 0;color:#2a2a35;font-size:6.4px;-webkit-text-stroke:0.02px #2a2a35;width:53.1px;overflow:hidden">OP-CZ-ALKAN</div>
<div class="t" style="left:265.5px;top:205.54px;transform:scaleX(0.8);transform-origin:0 0;color:#2a2a35;font-size:6.4px;-webkit-text-stroke:0.02px #2a2a35;width:120.9px;overflow:hidden">OP Alconn Czech - Dodavatel</div>
<div class="t" style="left:363.7px;top:205.54px;transform:scaleX(0.8);transform-origin:0 0;color:#2a2a35;font-size:6.4px;-webkit-text-stroke:0.02px #2a2a35;width:52.5px;overflow:hidden">Realizace</div>
<div class="t" style="left:407.2px;top:205.54px;transform:scaleX(0.86);transform-origin:0 0;color:#2a2a35;font-size:6.4px;-webkit-text-stroke:0.02px #2a2a35;width:61.0px;overflow:hidden">01.01.2010 12:38:31</div>
<div class="t" style="left:495.2px;top:205.54px;transform:scaleX(0.75);transform-origin:0 0;color:#2a2a35;font-size:6.4px;-webkit-text-stroke:0.02px #2a2a35;width:52.7px;overflow:hidden">ALKAN</div>
<div class="t" style="left:536.2px;top:205.54px;transform:scaleX(0.8);transform-origin:0 0;color:#2a2a35;font-size:6.4px;-webkit-text-stroke:0.02px #2a2a35;width:18.8px;overflow:hidden">76576</div>
<div class="ab" style="left:223px;top:212.9px;width:328.5px;height:8.56px;background:#f3f7fb"></div>
<div class="ab" style="left:264.3px;top:212.9px;width:142px;height:8.56px;background:#b4f289"></div>
<div class="t" style="left:224.2px;top:214.1px;transform:scaleX(0.75);transform-origin:0 0;color:#2a2a35;font-size:6.4px;-webkit-text-stroke:0.02px #2a2a35;width:53.1px;overflow:hidden">OP-CZ-FESKO</div>
<div class="t" style="left:265.5px;top:214.1px;transform:scaleX(0.8);transform-origin:0 0;color:#2a2a35;font-size:6.4px;-webkit-text-stroke:0.02px #2a2a35;width:120.9px;overflow:hidden">OP Fesko - Malo</div>
<div class="t" style="left:363.7px;top:214.1px;transform:scaleX(0.8);transform-origin:0 0;color:#2a2a35;font-size:6.4px;-webkit-text-stroke:0.02px #2a2a35;width:52.5px;overflow:hidden">Realizace</div>
<div class="t" style="left:407.2px;top:214.1px;transform:scaleX(0.86);transform-origin:0 0;color:#2a2a35;font-size:6.4px;-webkit-text-stroke:0.02px #2a2a35;width:61.0px;overflow:hidden">07.12.2012 11:12:46</div>
<div class="t" style="left:461.2px;top:214.1px;transform:scaleX(0.8);transform-origin:0 0;color:#2a2a35;font-size:6.4px;-webkit-text-stroke:0.02px #2a2a35;width:40.6px;overflow:hidden">Poptávka</div>
<div class="t" style="left:495.2px;top:214.1px;transform:scaleX(0.75);transform-origin:0 0;color:#2a2a35;font-size:6.4px;-webkit-text-stroke:0.02px #2a2a35;width:52.7px;overflow:hidden">O-FESKO</div>
<div class="t" style="left:536.2px;top:214.1px;transform:scaleX(0.8);transform-origin:0 0;color:#2a2a35;font-size:6.4px;-webkit-text-stroke:0.02px #2a2a35;width:18.8px;overflow:hidden">76565</div>
<div class="ab" style="left:223px;top:221.46px;width:328.5px;height:8.56px;background:#fff"></div>
<div class="ab" style="left:264.3px;top:221.46px;width:142px;height:8.56px;background:#d8fac0"></div>
<div class="t" style="left:224.2px;top:222.66px;transform:scaleX(0.75);transform-origin:0 0;color:#2a2a35;font-size:6.4px;-webkit-text-stroke:0.02px #2a2a35;width:53.1px;overflow:hidden">QWERTZ</div>
<div class="t" style="left:265.5px;top:222.66px;transform:scaleX(0.8);transform-origin:0 0;color:#2a2a35;font-size:6.4px;-webkit-text-stroke:0.02px #2a2a35;width:120.9px;overflow:hidden">Realizace generálního obchodního případu</div>
<div class="t" style="left:363.7px;top:222.66px;transform:scaleX(0.8);transform-origin:0 0;color:#2a2a35;font-size:6.4px;-webkit-text-stroke:0.02px #2a2a35;width:52.5px;overflow:hidden">Kontakt</div>
<div class="t" style="left:407.2px;top:222.66px;transform:scaleX(0.86);transform-origin:0 0;color:#2a2a35;font-size:6.4px;-webkit-text-stroke:0.02px #2a2a35;width:61.0px;overflow:hidden">10.05.2018 15:16:41</div>
<div class="ab" style="left:264.3px;top:84.5px;width:0.6px;height:145.52px;background:rgba(200,215,235,0.35)"></div>
<div class="ab" style="left:362.5px;top:84.5px;width:0.6px;height:145.52px;background:rgba(200,215,235,0.35)"></div>
<div class="ab" style="left:406px;top:84.5px;width:0.6px;height:145.52px;background:rgba(200,215,235,0.35)"></div>
<div class="ab" style="left:460px;top:84.5px;width:0.6px;height:145.52px;background:rgba(200,215,235,0.35)"></div>
<div class="ab" style="left:494px;top:84.5px;width:0.6px;height:145.52px;background:rgba(200,215,235,0.35)"></div>
<div class="ab" style="left:535px;top:84.5px;width:0.6px;height:145.52px;background:rgba(200,215,235,0.35)"></div>
<div class="ab" style="left:551.5px;top:67.3px;width:8px;height:163px;background:#f1f5fa;border-top:1px solid #e3ebf4"></div>
<div class="ab" style="left:551.5px;top:68.3px;width:8px;height:7.5px;background:#fbfcfe"></div>
<div class="ab" style="left:551.5px;top:75.8px;width:8px;height:145.7px;background:#d3e2f1"></div>
<svg class="ab" style="left:551.5px;top:67.5px" width="8" height="8" viewBox="0 0 8 8"><path d="M1.8 5 L4 2.8 L6.2 5" stroke="#333" stroke-width="1" fill="none"/></svg>
<div class="ab" style="left:551.5px;top:230px;width:8px;height:137px;background:#f1f5fa"></div>
<svg class="ab" style="left:551.5px;top:359.5px" width="8" height="8" viewBox="0 0 8 8"><path d="M1.8 3 L4 5.2 L6.2 3" stroke="#333" stroke-width="1" fill="none"/></svg>
<div class="ab" style="left:223px;top:367.5px;width:328.5px;height:8px;background:#f3f6fa"></div>
<div class="ab" style="left:231px;top:368px;width:8.5px;height:7px;background:#dbe6f2"></div>
<svg class="ab" style="left:223.5px;top:367.5px" width="8" height="8" viewBox="0 0 8 8"><path d="M5 1.8 L2.8 4 L5 6.2" stroke="#333" stroke-width="1" fill="none"/></svg>
<svg class="ab" style="left:544px;top:367.5px" width="8" height="8" viewBox="0 0 8 8"><path d="M3 1.8 L5.2 4 L3 6.2" stroke="#333" stroke-width="1" fill="none"/></svg>
<div class="ab" style="left:223px;top:380.6px;width:6px;height:6px;background:#fff;border:0.8px solid #b0b0b0"></div>
<div class="t" style="left:231px;top:381px;transform:scaleX(0.8);transform-origin:0 0;color:#333;font-size:6.3px;-webkit-text-stroke:0.05px #333">Nesledované</div>
<div class="ab" style="left:268.4px;top:380.6px;width:6px;height:6px;background:#fff;border:0.8px solid #b0b0b0"></div>
<div class="t" style="left:276.4px;top:381px;transform:scaleX(0.8);transform-origin:0 0;color:#333;font-size:6.3px;-webkit-text-stroke:0.05px #333">Sledované</div>
<div class="ab" style="left:314px;top:380.6px;width:6px;height:6px;background:#fff;border:0.8px solid #b0b0b0"></div>
<div class="t" style="left:322px;top:381px;transform:scaleX(0.8);transform-origin:0 0;color:#333;font-size:6.3px;-webkit-text-stroke:0.05px #333">Vrcholové</div>
<div class="ab" style="left:572px;top:59.0px;width:61px;height:10.4px;background:#4b86b9"></div>
<div class="t" style="left:572px;top:61.4px;width:61px;text-align:center;color:#eef4fa;font-size:6px;transform:scaleX(0.85)">Poznámky</div>
<div class="ab" style="left:572px;top:72.3px;width:61px;height:10.4px;background:#4b86b9"></div>
<div class="t" style="left:572px;top:74.7px;width:61px;text-align:center;color:#eef4fa;font-size:6px;transform:scaleX(0.85)">Přílohy</div>
<div class="ab" style="left:572px;top:85.6px;width:61px;height:10.4px;background:#4b86b9"></div>
<div class="t" style="left:572px;top:88.0px;width:61px;text-align:center;color:#eef4fa;font-size:6px;transform:scaleX(0.85)">Elektronické zprávy</div>
<div class="ab" style="left:572px;top:98.9px;width:61px;height:10.4px;background:#4b86b9"></div>
<div class="t" style="left:572px;top:101.30000000000001px;width:61px;text-align:center;color:#eef4fa;font-size:6px;transform:scaleX(0.85)">Souhrn informací</div>
<div class="ab" style="left:572px;top:112.2px;width:61px;height:10.4px;background:#4b86b9"></div>
<div class="t" style="left:572px;top:114.60000000000001px;width:61px;text-align:center;color:#eef4fa;font-size:6px;transform:scaleX(0.85)">Obchodní partner</div>
<div class="ab" style="left:572px;top:125.5px;width:61px;height:10.4px;background:#4b86b9"></div>
<div class="t" style="left:572px;top:127.9px;width:61px;text-align:center;color:#eef4fa;font-size:6px;transform:scaleX(0.85)">Konkurence</div>
<div class="ab" style="left:572px;top:138.8px;width:61px;height:10.4px;background:#4b86b9"></div>
<div class="t" style="left:572px;top:141.20000000000002px;width:61px;text-align:center;color:#eef4fa;font-size:6px;transform:scaleX(0.85)">Hodnocení</div>
<svg class="ab" style="left:625.5px;top:140.0px" width="8" height="8" viewBox="0 0 8 8"><path d="M2.5 1.8 L5.2 4 L2.5 6.2Z" fill="#fff"/></svg>
<div class="ab" style="left:572px;top:152.10000000000002px;width:61px;height:10.4px;background:#4b86b9"></div>
<div class="t" style="left:572px;top:154.50000000000003px;width:61px;text-align:center;color:#eef4fa;font-size:6px;transform:scaleX(0.85)">Členění akce</div>
<div class="ab" style="left:572px;top:165.4px;width:61px;height:10.4px;background:#4b86b9"></div>
<div class="t" style="left:572px;top:167.8px;width:61px;text-align:center;color:#eef4fa;font-size:6px;transform:scaleX(0.85)">Podřízené akce</div>
<svg class="ab" style="left:625.5px;top:166.6px" width="8" height="8" viewBox="0 0 8 8"><path d="M2.5 1.8 L5.2 4 L2.5 6.2Z" fill="#fff"/></svg>
<div class="ab" style="left:572px;top:178.7px;width:61px;height:10.4px;background:#4b86b9"></div>
<div class="t" style="left:572px;top:181.1px;width:61px;text-align:center;color:#eef4fa;font-size:6px;transform:scaleX(0.85)">Nadřízená akce</div>
<svg class="ab" style="left:625.5px;top:179.89999999999998px" width="8" height="8" viewBox="0 0 8 8"><path d="M2.5 1.8 L5.2 4 L2.5 6.2Z" fill="#fff"/></svg>
<div class="ab" style="left:572px;top:192.0px;width:61px;height:10.4px;background:#4b86b9"></div>
<div class="t" style="left:572px;top:194.4px;width:61px;text-align:center;color:#eef4fa;font-size:6px;transform:scaleX(0.85)">Související akce</div>
<div class="ab" style="left:572px;top:205.3px;width:61px;height:10.4px;background:#4b86b9"></div>
<div class="t" style="left:572px;top:207.70000000000002px;width:61px;text-align:center;color:#eef4fa;font-size:6px;transform:scaleX(0.85)">Rozpočet akce</div>
<div class="ab" style="left:572px;top:218.60000000000002px;width:61px;height:10.4px;background:#4b86b9"></div>
<div class="t" style="left:572px;top:221.00000000000003px;width:61px;text-align:center;color:#eef4fa;font-size:6px;transform:scaleX(0.85)">Doklady</div>
<svg class="ab" style="left:625.5px;top:219.8px" width="8" height="8" viewBox="0 0 8 8"><path d="M2.5 1.8 L5.2 4 L2.5 6.2Z" fill="#fff"/></svg>
<div class="ab" style="left:572px;top:231.9px;width:61px;height:10.4px;background:#4b86b9"></div>
<div class="t" style="left:572px;top:234.3px;width:61px;text-align:center;color:#eef4fa;font-size:6px;transform:scaleX(0.85)">Vyhodnocení akce</div>
<svg class="ab" style="left:625.5px;top:233.1px" width="8" height="8" viewBox="0 0 8 8"><path d="M2.5 1.8 L5.2 4 L2.5 6.2Z" fill="#fff"/></svg>
<div class="ab" style="left:572px;top:245.20000000000002px;width:61px;height:10.4px;background:#4b86b9"></div>
<div class="t" style="left:572px;top:247.60000000000002px;width:61px;text-align:center;color:#eef4fa;font-size:6px;transform:scaleX(0.85)">Požadavky na zdroje</div>
<svg class="ab" style="left:625.5px;top:246.4px" width="8" height="8" viewBox="0 0 8 8"><path d="M2.5 1.8 L5.2 4 L2.5 6.2Z" fill="#fff"/></svg>
<div class="ab" style="left:572px;top:258.5px;width:61px;height:10.4px;background:#4b86b9"></div>
<div class="t" style="left:572px;top:260.9px;width:61px;text-align:center;color:#eef4fa;font-size:6px;transform:scaleX(0.85)">Potřebné statky</div>
<svg class="ab" style="left:625.5px;top:259.7px" width="8" height="8" viewBox="0 0 8 8"><path d="M2.5 1.8 L5.2 4 L2.5 6.2Z" fill="#fff"/></svg>
<div class="ab" style="left:572px;top:271.8px;width:61px;height:10.4px;background:#4b86b9"></div>
<div class="t" style="left:572px;top:274.2px;width:61px;text-align:center;color:#eef4fa;font-size:6px;transform:scaleX(0.85)">Realizační tým</div>
<div class="ab" style="left:572px;top:285.1px;width:61px;height:10.4px;background:#4b86b9"></div>
<div class="t" style="left:572px;top:287.5px;width:61px;text-align:center;color:#eef4fa;font-size:6px;transform:scaleX(0.85)">Kontakty</div>
<div class="ab" style="left:572px;top:298.4px;width:61px;height:10.4px;background:#4b86b9"></div>
<div class="t" style="left:572px;top:300.79999999999995px;width:61px;text-align:center;color:#eef4fa;font-size:6px;transform:scaleX(0.85)">Další operace</div>
<svg class="ab" style="left:625.5px;top:299.59999999999997px" width="8" height="8" viewBox="0 0 8 8"><path d="M2.5 1.8 L5.2 4 L2.5 6.2Z" fill="#fff"/></svg>
<div class="ab" style="left:572px;top:384px;width:61px;height:10.6px;background:#4b86b9"></div>
<div class="t" style="left:572px;top:386.5px;width:61px;text-align:center;color:#eef4fa;font-size:5.8px">Tisk</div>
<div class="ab" style="left:231.2px;top:236px;width:309px;height:123.5px;background:#fff;border:1px solid #a6c2de;border-top:none"></div>
<div class="ab" style="left:231.2px;top:236px;width:309px;height:13px;background:#1c4a6b"></div>
<svg class="ab" style="left:234.5px;top:239px" width="8" height="8" viewBox="0 0 8 8"><path d="M0.8 0.5 L7.5 4 L0.8 7.5Z" fill="#f4f6f8"/></svg>
<div class="t" style="left:244px;top:238.5px;color:#fff;font-weight:bold;font-size:5.8px">Výročí</div>
<div class="t" style="left:492.5px;top:238.5px;color:#fff;font-weight:bold;font-size:5.6px">34</div>
<div class="ab" style="left:505px;top:242.5px;width:5px;height:0.8px;background:#dde6ef"></div>
<div class="ab" style="left:516.5px;top:240.2px;width:5px;height:5px;border:0.8px solid #eef2f6"></div>
<svg class="ab" style="left:528px;top:240px" width="6" height="6" viewBox="0 0 6 6"><path d="M0.6 0.6 L5.4 5.4 M5.4 0.6 L0.6 5.4" stroke="#eef2f6" stroke-width="0.9"/></svg>
<div class="ab" style="left:237px;top:253.2px;width:297px;height:9.6px;background:#4a87b9"></div>
<div class="t" style="left:237px;top:254px;width:297px;text-align:center;color:#fff;font-family:'Liberation Serif',serif;font-weight:bold;font-size:8.9px;line-height:9.6px;letter-spacing:0.35px">29.06.2018</div>
<div class="t" style="left:237px;top:267.8px;transform:scaleX(0.8);transform-origin:0 0;color:#333;font-size:6.3px;-webkit-text-stroke:0.05px #333">Dnes má svátek</div>
<div class="ab" style="left:237px;top:276.5px;width:110px;height:9.2px;background:#dce8fa"></div>
<div class="t" style="left:238.5px;top:277.2px;color:#222;font-weight:bold;font-size:5.8px">Petr a Pavel</div>
<div class="t" style="left:424px;top:267.8px;transform:scaleX(0.8);transform-origin:0 0;color:#333;font-size:6.3px;-webkit-text-stroke:0.05px #333">Zítra má svátek</div>
<div class="ab" style="left:424px;top:276px;width:110px;height:9.5px;background:#dce8fa"></div>
<div class="t" style="left:425.5px;top:277px;color:#222;font-weight:bold;font-size:5.8px">Šárka</div>
<div class="ab" style="left:237px;top:291.8px;width:297px;height:46px;background:#f4f7fc;border:1px solid #e6edf6"></div>
<div class="ab" style="left:238px;top:292.5px;width:274px;height:8.6px;background:#fafcfe"></div>
<div class="t" style="left:239.2px;top:293.2px;transform:scaleX(0.85);transform-origin:0 0;color:#3a3a44;font-size:6.2px">Typ výročí</div>
<div class="t" style="left:291.59999999999997px;top:293.2px;transform:scaleX(0.85);transform-origin:0 0;color:#3a3a44;font-size:6.2px">Název subjektu</div>
<div class="t" style="left:380.0px;top:293.2px;transform:scaleX(0.85);transform-origin:0 0;color:#3a3a44;font-size:6.2px">Datum vzniku výročí</div>
<div class="t" style="left:433.8px;top:293.2px;transform:scaleX(0.85);transform-origin:0 0;color:#3a3a44;font-size:6.2px">Počet let</div>
<div class="t" style="left:464.7px;top:293.2px;transform:scaleX(0.85);transform-origin:0 0;color:#3a3a44;font-size:6.2px">Počet dní do výročí</div>
<div class="ab" style="left:238px;top:301.1px;width:274px;height:8.5px;background:#0c4a70"></div>
<div class="t" style="left:239.2px;top:301.90000000000003px;transform:scaleX(0.85);transform-origin:0 0;color:#fff;font-size:6.2px;-webkit-text-stroke:0.04px #fff">Založení organizace</div>
<div class="t" style="left:291.59999999999997px;top:301.90000000000003px;transform:scaleX(0.85);transform-origin:0 0;color:#fff;font-size:6.2px;-webkit-text-stroke:0.04px #fff">RFW, a.s.</div>
<div class="t" style="left:380.0px;top:301.90000000000003px;transform:scaleX(0.85);transform-origin:0 0;color:#fff;font-size:6.2px;-webkit-text-stroke:0.04px #fff">15.07.2000</div>
<div class="t" style="left:433.8px;top:301.90000000000003px;transform:scaleX(0.85);transform-origin:0 0;color:#fff;font-size:6.2px;-webkit-text-stroke:0.04px #fff">18</div>
<div class="t" style="left:464.7px;top:301.90000000000003px;transform:scaleX(0.85);transform-origin:0 0;color:#fff;font-size:6.2px;-webkit-text-stroke:0.04px #fff">16</div>
<div class="ab" style="left:238px;top:309.6px;width:274px;height:8.5px;background:#c8d8f8"></div>
<div class="t" style="left:239.2px;top:310.40000000000003px;transform:scaleX(0.85);transform-origin:0 0;color:#333;font-size:6.2px;-webkit-text-stroke:0.04px #333">Založení organizace</div>
<div class="t" style="left:291.59999999999997px;top:310.40000000000003px;transform:scaleX(0.85);transform-origin:0 0;color:#333;font-size:6.2px;-webkit-text-stroke:0.04px #333">PAPYRUS, s.r.o.</div>
<div class="t" style="left:380.0px;top:310.40000000000003px;transform:scaleX(0.85);transform-origin:0 0;color:#333;font-size:6.2px;-webkit-text-stroke:0.04px #333">15.07.1997</div>
<div class="t" style="left:433.8px;top:310.40000000000003px;transform:scaleX(0.85);transform-origin:0 0;color:#333;font-size:6.2px;-webkit-text-stroke:0.04px #333">21</div>
<div class="t" style="left:464.7px;top:310.40000000000003px;transform:scaleX(0.85);transform-origin:0 0;color:#333;font-size:6.2px;-webkit-text-stroke:0.04px #333">16</div>
<div class="ab" style="left:238px;top:318.1px;width:274px;height:8.5px;background:#dfe8fa"></div>
<div class="t" style="left:239.2px;top:318.90000000000003px;transform:scaleX(0.85);transform-origin:0 0;color:#333;font-size:6.2px;-webkit-text-stroke:0.04px #333">Založení organizace</div>
<div class="t" style="left:291.59999999999997px;top:318.90000000000003px;transform:scaleX(0.85);transform-origin:0 0;color:#333;font-size:6.2px;-webkit-text-stroke:0.04px #333">DEGOS, s.r.o.</div>
<div class="t" style="left:380.0px;top:318.90000000000003px;transform:scaleX(0.85);transform-origin:0 0;color:#333;font-size:6.2px;-webkit-text-stroke:0.04px #333">01.08.2001</div>
<div class="t" style="left:433.8px;top:318.90000000000003px;transform:scaleX(0.85);transform-origin:0 0;color:#333;font-size:6.2px;-webkit-text-stroke:0.04px #333">17</div>
<div class="t" style="left:464.7px;top:318.90000000000003px;transform:scaleX(0.85);transform-origin:0 0;color:#333;font-size:6.2px;-webkit-text-stroke:0.04px #333">33</div>
<div class="ab" style="left:238px;top:326.6px;width:274px;height:8.5px;background:#c8d8f8"></div>
<div class="t" style="left:239.2px;top:327.40000000000003px;transform:scaleX(0.85);transform-origin:0 0;color:#333;font-size:6.2px;-webkit-text-stroke:0.04px #333">Založení organizace</div>
<div class="t" style="left:291.59999999999997px;top:327.40000000000003px;transform:scaleX(0.85);transform-origin:0 0;color:#333;font-size:6.2px;-webkit-text-stroke:0.04px #333">Hotel Sport</div>
<div class="t" style="left:380.0px;top:327.40000000000003px;transform:scaleX(0.85);transform-origin:0 0;color:#333;font-size:6.2px;-webkit-text-stroke:0.04px #333">01.08.2005</div>
<div class="t" style="left:433.8px;top:327.40000000000003px;transform:scaleX(0.85);transform-origin:0 0;color:#333;font-size:6.2px;-webkit-text-stroke:0.04px #333">13</div>
<div class="t" style="left:464.7px;top:327.40000000000003px;transform:scaleX(0.85);transform-origin:0 0;color:#333;font-size:6.2px;-webkit-text-stroke:0.04px #333">33</div>
<div class="ab" style="left:238px;top:301.1px;width:52.4px;height:8.5px;border:0.6px solid #b85060"></div>
<div class="ab" style="left:290.4px;top:292.5px;width:0.7px;height:42.6px;background:rgba(255,255,255,0.6)"></div>
<div class="ab" style="left:378.8px;top:292.5px;width:0.7px;height:42.6px;background:rgba(255,255,255,0.6)"></div>
<div class="ab" style="left:432.6px;top:292.5px;width:0.7px;height:42.6px;background:rgba(255,255,255,0.6)"></div>
<div class="ab" style="left:463.5px;top:292.5px;width:0.7px;height:42.6px;background:rgba(255,255,255,0.6)"></div>
<svg class="ab" style="left:525.5px;top:292.5px" width="8" height="8" viewBox="0 0 8 8"><path d="M1.8 5 L4 2.8 L6.2 5" stroke="#222" stroke-width="1" fill="none"/></svg>
<div class="ab" style="left:525.5px;top:300.5px;width:8px;height:2.5px;background:#dde8f5"></div>
<svg class="ab" style="left:525.5px;top:330px" width="8" height="8" viewBox="0 0 8 8"><path d="M1.8 3 L4 5.2 L6.2 3" stroke="#222" stroke-width="1" fill="none"/></svg>
<div class="t" style="left:237px;top:345.8px;transform:scaleX(0.8);transform-origin:0 0;color:#333;font-size:6.3px;-webkit-text-stroke:0.05px #333">Počet následných dní &nbsp;. &nbsp;. &nbsp;.</div>
<div class="ab" style="left:302px;top:344.6px;width:20.4px;height:8.8px;background:#fff;border:0.8px solid #e0e8f2"></div>
<div class="t" style="left:304px;top:345.1px;transform:scaleX(0.82);transform-origin:0 0;color:#333;font-size:6.3px">365</div>
<div class="t" style="left:328px;top:345.8px;transform:scaleX(0.8);transform-origin:0 0;color:#333;font-size:6.3px;-webkit-text-stroke:0.05px #333">Zobrazeno do &nbsp;. &nbsp;. &nbsp;.</div>
<div class="ab" style="left:377px;top:344.8px;width:56px;height:8.7px;background:#e0eafa"></div>
<div class="t" style="left:378px;top:345.1px;transform:scaleX(0.82);transform-origin:0 0;color:#333;font-size:6.3px;-webkit-text-stroke:0.05px #333">29.06.2019</div>
<div class="ab" style="left:473px;top:343.8px;width:61px;height:10.2px;background:#4b86b9"></div>
<div class="t" style="left:473px;top:346.2px;width:61px;text-align:center;color:#eef4fa;font-size:5.8px">Spojení</div>
<svg class="ab" style="left:264px;top:446px" width="34" height="28" viewBox="0 0 34 28"><defs><linearGradient id="tb" x1="0" y1="0" x2="0" y2="1"><stop offset="0" stop-color="#f0f0f0"/><stop offset="1" stop-color="#c6c6c6"/></linearGradient><radialGradient id="hd" cx=".4" cy=".35" r=".7"><stop offset="0" stop-color="#e8e8e8"/><stop offset="1" stop-color="#8a8a8a"/></radialGradient><linearGradient id="bd" x1="0" y1="0" x2="0" y2="1"><stop offset="0" stop-color="#8a8a8a"/><stop offset="1" stop-color="#5a5a5a"/></linearGradient></defs><path d="M7 10 Q8.5 8.5 10 10 L9 24 H4.5Z" fill="url(#bd)"/><path d="M3.5 13.5 Q5 12 6.5 13.5 L7 24 H2.5Z" fill="url(#bd)"/><path d="M1 17 Q2.5 15.5 4 17 L5 24 H1Z" fill="url(#bd)"/><path d="M24 10 Q25.5 8.5 27 10 L29.5 24 H25Z" fill="url(#bd)"/><path d="M27.5 13.5 Q29 12 30.5 13.5 L31.5 24 H27Z" fill="url(#bd)"/><path d="M28.5 17 Q30 15.5 31.5 17 L32.5 24 H29Z" fill="url(#bd)"/><circle cx="8.6" cy="8.2" r="2.2" fill="url(#hd)"/><circle cx="5.6" cy="11.6" r="2.2" fill="url(#hd)"/><circle cx="3" cy="15.2" r="2.2" fill="url(#hd)"/><circle cx="25.4" cy="8.2" r="2.2" fill="url(#hd)"/><circle cx="28.4" cy="11.6" r="2.2" fill="url(#hd)"/><circle cx="30.6" cy="15.2" r="2.2" fill="url(#hd)"/><rect x="14" y="6" width="6" height="7" rx="1" fill="url(#bd)"/><rect x="16" y="6" width="2" height="6" fill="#2a8ae0"/><circle cx="17" cy="3.6" r="2.1" fill="url(#hd)"/><path d="M11.5 11.8 H22.5 Q23.4 11.8 23.8 12.6 L28.2 23.6 Q28.6 25 27.2 25 H6.8 Q5.4 25 5.8 23.6 L10.2 12.6 Q10.6 11.8 11.5 11.8Z" fill="url(#tb)"/><rect x="19.5" y="22.3" width="7" height="1" fill="#9a9a9a"/><rect x="6" y="25.3" width="22" height="2" fill="#fff" opacity=".08"/></svg>
<div class="t" style="left:245px;top:478.5px;width:70px;text-align:center;color:#fff;font-size:5.4px;letter-spacing:-0.15px">Obchodní případy</div>
<svg class="ab" style="left:329px;top:450px" width="34" height="25" viewBox="0 0 34 25"><defs><linearGradient id="cd" x1="0" y1="0" x2="0" y2="1"><stop offset="0" stop-color="#ececec"/><stop offset="1" stop-color="#c9c9c9"/></linearGradient></defs><rect x="8" y="2" width="24.5" height="16" rx="1" fill="#7a7a7a"/><rect x="10" y="2.2" width="10" height="1.2" fill="#d8d8d8"/><rect x="5" y="4.6" width="24.5" height="16" rx="1" fill="#e8141e"/><rect x="6.5" y="4.8" width="10" height="1.2" fill="#f4b0b0"/><rect x="1.8" y="7" width="24.5" height="15.6" rx="1.2" fill="url(#cd)"/><rect x="4.2" y="9" width="8.5" height="10.5" fill="#fafafa"/><circle cx="8.4" cy="12" r="1.8" fill="#555"/><path d="M5 19.5 Q5 15 8.4 14.6 Q11.8 15 11.8 19.5Z" fill="#5a5a5a"/><path d="M7.9 15 H8.9 L8.6 18.5 H8.2Z" fill="#e01010"/><path d="M15 13.2 Q17 12 19 13.2 T23.5 13 M15 15.6 Q17 14.6 19 15.6 T23.5 15.4" stroke="#333" stroke-width="1" fill="none"/><rect x="17.5" y="20.3" width="7" height="1.5" fill="#aaa"/><rect x="2" y="22.8" width="24" height="2" fill="#fff" opacity=".07"/></svg>
<div class="t" style="left:310px;top:480px;width:70px;text-align:center;color:#fff;font-size:5.4px;line-height:6.6px;letter-spacing:-0.15px">Seznam členů<br>organizací</div>
<svg class="ab" style="left:402px;top:447px" width="23" height="28" viewBox="0 0 23 28"><rect x="2.5" y="3.5" width="18" height="22.3" rx="1.2" fill="#fcfcfc"/><rect x="1.4" y="1.2" width="20.8" height="3.6" rx="1.5" fill="#22d02a"/><rect x="2.5" y="1.6" width="6" height="1" fill="#9af09a"/><rect x="5.6" y="7.4" width="2.6" height="11" rx="1.1" fill="#5c5c5c"/><path d="M10.8 8.6 Q12.2 7.4 14 7.4 Q17.2 7.4 17.2 10.2 Q17.2 12.4 14.6 12.9 Q17.6 13.3 17.6 15.6 Q17.6 18.6 14 18.6 Q12 18.6 10.6 17.4" fill="none" stroke="#5c5c5c" stroke-width="1.6" stroke-linecap="round"/><path d="M12.8 12.9 H14.6" stroke="#5c5c5c" stroke-width="1.4"/><path d="M7.5 21.2 H15 M6 23.4 Q8 22.4 10 23.4 T16 23.2" stroke="#555" stroke-width=".7" fill="none"/><rect x="2.5" y="26" width="18" height="2" fill="#fff" opacity=".08"/></svg>
<div class="t" style="left:378px;top:480.5px;width:74px;text-align:center;color:#fff;font-size:5.4px;letter-spacing:-0.15px">Marketingové akce</div></body></html>
